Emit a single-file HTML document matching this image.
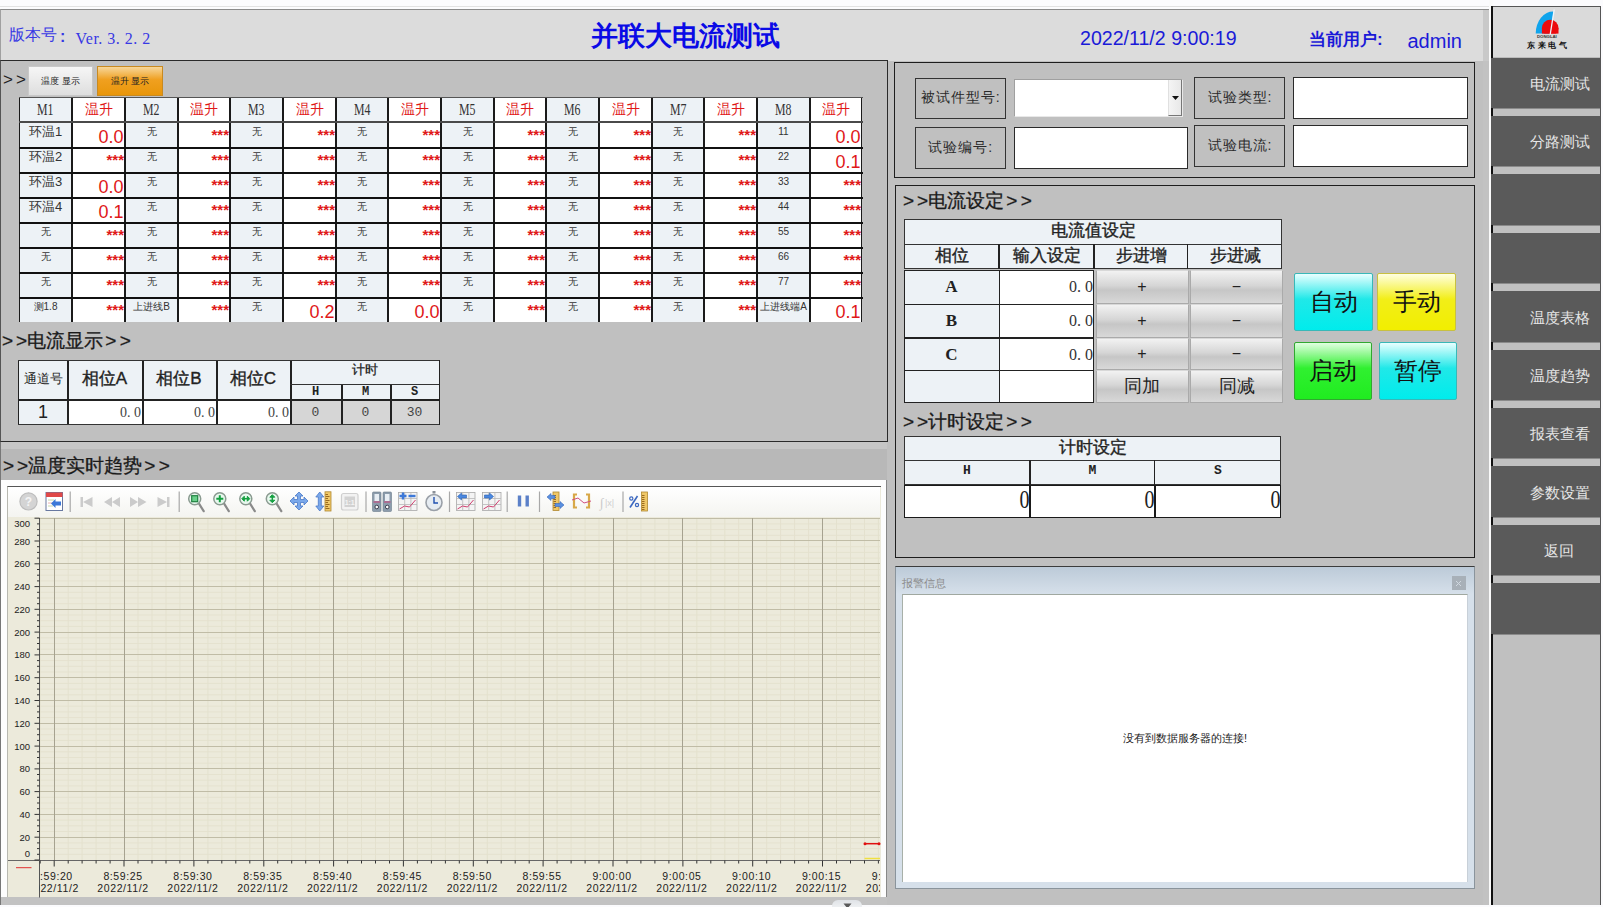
<!DOCTYPE html><html><head><meta charset="utf-8"><style>
html,body{margin:0;padding:0;width:1603px;height:907px;overflow:hidden;background:#fbfbfd;}
body{position:relative;font-family:'Liberation Sans', sans-serif;}
div{box-sizing:border-box;}
.c{display:flex;align-items:center;justify-content:center;}
</style></head><body>
<div style="position:absolute;left:0px;top:6px;width:1489px;height:1px;background:#e2e2e2"></div>
<div style="position:absolute;left:0px;top:9px;width:1489px;height:52px;background:#dcdcdc;border-top:1px solid #8a8a8a;border-left:1px solid #a0a0a0"></div>
<div style="position:absolute;left:1483px;top:10px;width:6px;height:51px;background:#c9c9c9"></div>
<div style="position:absolute;left:9px;top:25px;white-space:nowrap;font-size:16px;color:#3838e4;line-height:20px">版本号</div>
<div style="position:absolute;left:60px;top:26.5px;white-space:nowrap;font-size:16px;font-weight:bold;color:#3838e4;line-height:20px">:</div>
<div style="position:absolute;left:75.5px;top:28.5px;white-space:nowrap;font-family:'Liberation Serif', serif;letter-spacing:0.5px;font-size:16px;color:#3838e4;line-height:20px">Ver. 3. 2. 2</div>
<div style="position:absolute;left:591px;top:20px;white-space:nowrap;font-size:27px;font-weight:bold;color:#0a0ae6;line-height:32px">并联大电流测试</div>
<div style="position:absolute;left:1080px;top:26.5px;white-space:nowrap;font-size:19.6px;color:#1a1ad8;line-height:22px">2022/11/2 9:00:19</div>
<div style="position:absolute;left:1309px;top:29px;white-space:nowrap;font-size:17px;font-weight:bold;color:#1a1ad8;line-height:22px">当前用户:</div>
<div style="position:absolute;left:1407.5px;top:30px;white-space:nowrap;font-size:20px;color:#1a1ad8;line-height:22px">admin</div>
<div style="position:absolute;left:0px;top:60px;width:887.5px;height:382px;background:#c0c0c0;border:1.5px solid #2a2a2a;border-left:1px solid #555"></div>
<div style="position:absolute;left:3px;top:70px;white-space:nowrap;font-size:17px;color:#222;line-height:20px">&gt;<span style="margin-left:3px">&gt;</span></div>
<div style="position:absolute;left:28px;top:66px;width:65px;height:30px;background:linear-gradient(#f6f6f6,#dedede);border:1px solid #c8c8c8;font-size:9px;color:#222"><div class="c" style="height:100%">温度 显示</div></div>
<div style="position:absolute;left:97px;top:66px;width:66px;height:30px;background:linear-gradient(#f7d79a,#f0a020 45%,#e8960a);border:1px solid #c98a20;font-size:9px;color:#222"><div class="c" style="height:100%">温升 显示</div></div>
<div style="position:absolute;left:19px;top:97px;width:53px;height:25px;background:#edf2f6"></div>
<div style="position:absolute;left:19px;top:100px;white-space:nowrap;width:53px;text-align:center;font-family:'Liberation Serif', serif;font-size:16px;color:#333;line-height:20px"><span style="display:inline-block;transform:scaleX(0.74)">M1</span></div>
<div style="position:absolute;left:19px;top:122px;width:53px;height:25px;background:#edf2f6"></div>
<div style="position:absolute;left:19px;top:125px;white-space:nowrap;width:53px;text-align:center;font-size:13px;color:#333;line-height:14px">环温1</div>
<div style="position:absolute;left:19px;top:147px;width:53px;height:25px;background:#edf2f6"></div>
<div style="position:absolute;left:19px;top:150px;white-space:nowrap;width:53px;text-align:center;font-size:13px;color:#333;line-height:14px">环温2</div>
<div style="position:absolute;left:19px;top:172px;width:53px;height:25px;background:#edf2f6"></div>
<div style="position:absolute;left:19px;top:175px;white-space:nowrap;width:53px;text-align:center;font-size:13px;color:#333;line-height:14px">环温3</div>
<div style="position:absolute;left:19px;top:197px;width:53px;height:25px;background:#edf2f6"></div>
<div style="position:absolute;left:19px;top:200px;white-space:nowrap;width:53px;text-align:center;font-size:13px;color:#333;line-height:14px">环温4</div>
<div style="position:absolute;left:19px;top:222px;width:53px;height:25px;background:#edf2f6"></div>
<div style="position:absolute;left:19px;top:225px;white-space:nowrap;width:53px;text-align:center;font-size:10px;color:#333;line-height:14px">无</div>
<div style="position:absolute;left:19px;top:247px;width:53px;height:25px;background:#edf2f6"></div>
<div style="position:absolute;left:19px;top:250px;white-space:nowrap;width:53px;text-align:center;font-size:10px;color:#333;line-height:14px">无</div>
<div style="position:absolute;left:19px;top:272px;width:53px;height:25px;background:#edf2f6"></div>
<div style="position:absolute;left:19px;top:275px;white-space:nowrap;width:53px;text-align:center;font-size:10px;color:#333;line-height:14px">无</div>
<div style="position:absolute;left:19px;top:297px;width:53px;height:25px;background:#edf2f6"></div>
<div style="position:absolute;left:19px;top:300px;white-space:nowrap;width:53px;text-align:center;font-size:10px;color:#333;line-height:14px">测1.8</div>
<div style="position:absolute;left:72px;top:97px;width:53px;height:25px;background:#ffffff"></div>
<div style="position:absolute;left:72px;top:100px;white-space:nowrap;width:53px;text-align:center;font-size:13.5px;color:#e01818;line-height:20px">温升</div>
<div style="position:absolute;left:72px;top:122px;width:53px;height:25px;background:#ffffff"></div>
<div style="position:absolute;left:72px;top:126.5px;white-space:nowrap;width:51.5px;text-align:right;font-size:18px;color:#e01818;line-height:20px">0.0</div>
<div style="position:absolute;left:72px;top:147px;width:53px;height:25px;background:#ffffff"></div>
<div style="position:absolute;left:72px;top:152px;white-space:nowrap;width:52px;text-align:right;font-size:15px;font-weight:bold;color:#e01818;line-height:15px">***</div>
<div style="position:absolute;left:72px;top:172px;width:53px;height:25px;background:#ffffff"></div>
<div style="position:absolute;left:72px;top:176.5px;white-space:nowrap;width:51.5px;text-align:right;font-size:18px;color:#e01818;line-height:20px">0.0</div>
<div style="position:absolute;left:72px;top:197px;width:53px;height:25px;background:#ffffff"></div>
<div style="position:absolute;left:72px;top:201.5px;white-space:nowrap;width:51.5px;text-align:right;font-size:18px;color:#e01818;line-height:20px">0.1</div>
<div style="position:absolute;left:72px;top:222px;width:53px;height:25px;background:#ffffff"></div>
<div style="position:absolute;left:72px;top:227px;white-space:nowrap;width:52px;text-align:right;font-size:15px;font-weight:bold;color:#e01818;line-height:15px">***</div>
<div style="position:absolute;left:72px;top:247px;width:53px;height:25px;background:#ffffff"></div>
<div style="position:absolute;left:72px;top:252px;white-space:nowrap;width:52px;text-align:right;font-size:15px;font-weight:bold;color:#e01818;line-height:15px">***</div>
<div style="position:absolute;left:72px;top:272px;width:53px;height:25px;background:#ffffff"></div>
<div style="position:absolute;left:72px;top:277px;white-space:nowrap;width:52px;text-align:right;font-size:15px;font-weight:bold;color:#e01818;line-height:15px">***</div>
<div style="position:absolute;left:72px;top:297px;width:53px;height:25px;background:#ffffff"></div>
<div style="position:absolute;left:72px;top:302px;white-space:nowrap;width:52px;text-align:right;font-size:15px;font-weight:bold;color:#e01818;line-height:15px">***</div>
<div style="position:absolute;left:125px;top:97px;width:53px;height:25px;background:#edf2f6"></div>
<div style="position:absolute;left:125px;top:100px;white-space:nowrap;width:53px;text-align:center;font-family:'Liberation Serif', serif;font-size:16px;color:#333;line-height:20px"><span style="display:inline-block;transform:scaleX(0.74)">M2</span></div>
<div style="position:absolute;left:125px;top:122px;width:53px;height:25px;background:#edf2f6"></div>
<div style="position:absolute;left:125px;top:125px;white-space:nowrap;width:53px;text-align:center;font-size:10px;color:#333;line-height:14px">无</div>
<div style="position:absolute;left:125px;top:147px;width:53px;height:25px;background:#edf2f6"></div>
<div style="position:absolute;left:125px;top:150px;white-space:nowrap;width:53px;text-align:center;font-size:10px;color:#333;line-height:14px">无</div>
<div style="position:absolute;left:125px;top:172px;width:53px;height:25px;background:#edf2f6"></div>
<div style="position:absolute;left:125px;top:175px;white-space:nowrap;width:53px;text-align:center;font-size:10px;color:#333;line-height:14px">无</div>
<div style="position:absolute;left:125px;top:197px;width:53px;height:25px;background:#edf2f6"></div>
<div style="position:absolute;left:125px;top:200px;white-space:nowrap;width:53px;text-align:center;font-size:10px;color:#333;line-height:14px">无</div>
<div style="position:absolute;left:125px;top:222px;width:53px;height:25px;background:#edf2f6"></div>
<div style="position:absolute;left:125px;top:225px;white-space:nowrap;width:53px;text-align:center;font-size:10px;color:#333;line-height:14px">无</div>
<div style="position:absolute;left:125px;top:247px;width:53px;height:25px;background:#edf2f6"></div>
<div style="position:absolute;left:125px;top:250px;white-space:nowrap;width:53px;text-align:center;font-size:10px;color:#333;line-height:14px">无</div>
<div style="position:absolute;left:125px;top:272px;width:53px;height:25px;background:#edf2f6"></div>
<div style="position:absolute;left:125px;top:275px;white-space:nowrap;width:53px;text-align:center;font-size:10px;color:#333;line-height:14px">无</div>
<div style="position:absolute;left:125px;top:297px;width:53px;height:25px;background:#edf2f6"></div>
<div style="position:absolute;left:125px;top:300px;white-space:nowrap;width:53px;text-align:center;font-size:10px;color:#333;line-height:14px">上进线B</div>
<div style="position:absolute;left:178px;top:97px;width:52px;height:25px;background:#ffffff"></div>
<div style="position:absolute;left:178px;top:100px;white-space:nowrap;width:52px;text-align:center;font-size:13.5px;color:#e01818;line-height:20px">温升</div>
<div style="position:absolute;left:178px;top:122px;width:52px;height:25px;background:#ffffff"></div>
<div style="position:absolute;left:178px;top:127px;white-space:nowrap;width:51px;text-align:right;font-size:15px;font-weight:bold;color:#e01818;line-height:15px">***</div>
<div style="position:absolute;left:178px;top:147px;width:52px;height:25px;background:#ffffff"></div>
<div style="position:absolute;left:178px;top:152px;white-space:nowrap;width:51px;text-align:right;font-size:15px;font-weight:bold;color:#e01818;line-height:15px">***</div>
<div style="position:absolute;left:178px;top:172px;width:52px;height:25px;background:#ffffff"></div>
<div style="position:absolute;left:178px;top:177px;white-space:nowrap;width:51px;text-align:right;font-size:15px;font-weight:bold;color:#e01818;line-height:15px">***</div>
<div style="position:absolute;left:178px;top:197px;width:52px;height:25px;background:#ffffff"></div>
<div style="position:absolute;left:178px;top:202px;white-space:nowrap;width:51px;text-align:right;font-size:15px;font-weight:bold;color:#e01818;line-height:15px">***</div>
<div style="position:absolute;left:178px;top:222px;width:52px;height:25px;background:#ffffff"></div>
<div style="position:absolute;left:178px;top:227px;white-space:nowrap;width:51px;text-align:right;font-size:15px;font-weight:bold;color:#e01818;line-height:15px">***</div>
<div style="position:absolute;left:178px;top:247px;width:52px;height:25px;background:#ffffff"></div>
<div style="position:absolute;left:178px;top:252px;white-space:nowrap;width:51px;text-align:right;font-size:15px;font-weight:bold;color:#e01818;line-height:15px">***</div>
<div style="position:absolute;left:178px;top:272px;width:52px;height:25px;background:#ffffff"></div>
<div style="position:absolute;left:178px;top:277px;white-space:nowrap;width:51px;text-align:right;font-size:15px;font-weight:bold;color:#e01818;line-height:15px">***</div>
<div style="position:absolute;left:178px;top:297px;width:52px;height:25px;background:#ffffff"></div>
<div style="position:absolute;left:178px;top:302px;white-space:nowrap;width:51px;text-align:right;font-size:15px;font-weight:bold;color:#e01818;line-height:15px">***</div>
<div style="position:absolute;left:230px;top:97px;width:53px;height:25px;background:#edf2f6"></div>
<div style="position:absolute;left:230px;top:100px;white-space:nowrap;width:53px;text-align:center;font-family:'Liberation Serif', serif;font-size:16px;color:#333;line-height:20px"><span style="display:inline-block;transform:scaleX(0.74)">M3</span></div>
<div style="position:absolute;left:230px;top:122px;width:53px;height:25px;background:#edf2f6"></div>
<div style="position:absolute;left:230px;top:125px;white-space:nowrap;width:53px;text-align:center;font-size:10px;color:#333;line-height:14px">无</div>
<div style="position:absolute;left:230px;top:147px;width:53px;height:25px;background:#edf2f6"></div>
<div style="position:absolute;left:230px;top:150px;white-space:nowrap;width:53px;text-align:center;font-size:10px;color:#333;line-height:14px">无</div>
<div style="position:absolute;left:230px;top:172px;width:53px;height:25px;background:#edf2f6"></div>
<div style="position:absolute;left:230px;top:175px;white-space:nowrap;width:53px;text-align:center;font-size:10px;color:#333;line-height:14px">无</div>
<div style="position:absolute;left:230px;top:197px;width:53px;height:25px;background:#edf2f6"></div>
<div style="position:absolute;left:230px;top:200px;white-space:nowrap;width:53px;text-align:center;font-size:10px;color:#333;line-height:14px">无</div>
<div style="position:absolute;left:230px;top:222px;width:53px;height:25px;background:#edf2f6"></div>
<div style="position:absolute;left:230px;top:225px;white-space:nowrap;width:53px;text-align:center;font-size:10px;color:#333;line-height:14px">无</div>
<div style="position:absolute;left:230px;top:247px;width:53px;height:25px;background:#edf2f6"></div>
<div style="position:absolute;left:230px;top:250px;white-space:nowrap;width:53px;text-align:center;font-size:10px;color:#333;line-height:14px">无</div>
<div style="position:absolute;left:230px;top:272px;width:53px;height:25px;background:#edf2f6"></div>
<div style="position:absolute;left:230px;top:275px;white-space:nowrap;width:53px;text-align:center;font-size:10px;color:#333;line-height:14px">无</div>
<div style="position:absolute;left:230px;top:297px;width:53px;height:25px;background:#edf2f6"></div>
<div style="position:absolute;left:230px;top:300px;white-space:nowrap;width:53px;text-align:center;font-size:10px;color:#333;line-height:14px">无</div>
<div style="position:absolute;left:283px;top:97px;width:53px;height:25px;background:#ffffff"></div>
<div style="position:absolute;left:283px;top:100px;white-space:nowrap;width:53px;text-align:center;font-size:13.5px;color:#e01818;line-height:20px">温升</div>
<div style="position:absolute;left:283px;top:122px;width:53px;height:25px;background:#ffffff"></div>
<div style="position:absolute;left:283px;top:127px;white-space:nowrap;width:52px;text-align:right;font-size:15px;font-weight:bold;color:#e01818;line-height:15px">***</div>
<div style="position:absolute;left:283px;top:147px;width:53px;height:25px;background:#ffffff"></div>
<div style="position:absolute;left:283px;top:152px;white-space:nowrap;width:52px;text-align:right;font-size:15px;font-weight:bold;color:#e01818;line-height:15px">***</div>
<div style="position:absolute;left:283px;top:172px;width:53px;height:25px;background:#ffffff"></div>
<div style="position:absolute;left:283px;top:177px;white-space:nowrap;width:52px;text-align:right;font-size:15px;font-weight:bold;color:#e01818;line-height:15px">***</div>
<div style="position:absolute;left:283px;top:197px;width:53px;height:25px;background:#ffffff"></div>
<div style="position:absolute;left:283px;top:202px;white-space:nowrap;width:52px;text-align:right;font-size:15px;font-weight:bold;color:#e01818;line-height:15px">***</div>
<div style="position:absolute;left:283px;top:222px;width:53px;height:25px;background:#ffffff"></div>
<div style="position:absolute;left:283px;top:227px;white-space:nowrap;width:52px;text-align:right;font-size:15px;font-weight:bold;color:#e01818;line-height:15px">***</div>
<div style="position:absolute;left:283px;top:247px;width:53px;height:25px;background:#ffffff"></div>
<div style="position:absolute;left:283px;top:252px;white-space:nowrap;width:52px;text-align:right;font-size:15px;font-weight:bold;color:#e01818;line-height:15px">***</div>
<div style="position:absolute;left:283px;top:272px;width:53px;height:25px;background:#ffffff"></div>
<div style="position:absolute;left:283px;top:277px;white-space:nowrap;width:52px;text-align:right;font-size:15px;font-weight:bold;color:#e01818;line-height:15px">***</div>
<div style="position:absolute;left:283px;top:297px;width:53px;height:25px;background:#ffffff"></div>
<div style="position:absolute;left:283px;top:301.5px;white-space:nowrap;width:51.5px;text-align:right;font-size:18px;color:#e01818;line-height:20px">0.2</div>
<div style="position:absolute;left:336px;top:97px;width:52px;height:25px;background:#edf2f6"></div>
<div style="position:absolute;left:336px;top:100px;white-space:nowrap;width:52px;text-align:center;font-family:'Liberation Serif', serif;font-size:16px;color:#333;line-height:20px"><span style="display:inline-block;transform:scaleX(0.74)">M4</span></div>
<div style="position:absolute;left:336px;top:122px;width:52px;height:25px;background:#edf2f6"></div>
<div style="position:absolute;left:336px;top:125px;white-space:nowrap;width:52px;text-align:center;font-size:10px;color:#333;line-height:14px">无</div>
<div style="position:absolute;left:336px;top:147px;width:52px;height:25px;background:#edf2f6"></div>
<div style="position:absolute;left:336px;top:150px;white-space:nowrap;width:52px;text-align:center;font-size:10px;color:#333;line-height:14px">无</div>
<div style="position:absolute;left:336px;top:172px;width:52px;height:25px;background:#edf2f6"></div>
<div style="position:absolute;left:336px;top:175px;white-space:nowrap;width:52px;text-align:center;font-size:10px;color:#333;line-height:14px">无</div>
<div style="position:absolute;left:336px;top:197px;width:52px;height:25px;background:#edf2f6"></div>
<div style="position:absolute;left:336px;top:200px;white-space:nowrap;width:52px;text-align:center;font-size:10px;color:#333;line-height:14px">无</div>
<div style="position:absolute;left:336px;top:222px;width:52px;height:25px;background:#edf2f6"></div>
<div style="position:absolute;left:336px;top:225px;white-space:nowrap;width:52px;text-align:center;font-size:10px;color:#333;line-height:14px">无</div>
<div style="position:absolute;left:336px;top:247px;width:52px;height:25px;background:#edf2f6"></div>
<div style="position:absolute;left:336px;top:250px;white-space:nowrap;width:52px;text-align:center;font-size:10px;color:#333;line-height:14px">无</div>
<div style="position:absolute;left:336px;top:272px;width:52px;height:25px;background:#edf2f6"></div>
<div style="position:absolute;left:336px;top:275px;white-space:nowrap;width:52px;text-align:center;font-size:10px;color:#333;line-height:14px">无</div>
<div style="position:absolute;left:336px;top:297px;width:52px;height:25px;background:#edf2f6"></div>
<div style="position:absolute;left:336px;top:300px;white-space:nowrap;width:52px;text-align:center;font-size:10px;color:#333;line-height:14px">无</div>
<div style="position:absolute;left:388px;top:97px;width:53px;height:25px;background:#ffffff"></div>
<div style="position:absolute;left:388px;top:100px;white-space:nowrap;width:53px;text-align:center;font-size:13.5px;color:#e01818;line-height:20px">温升</div>
<div style="position:absolute;left:388px;top:122px;width:53px;height:25px;background:#ffffff"></div>
<div style="position:absolute;left:388px;top:127px;white-space:nowrap;width:52px;text-align:right;font-size:15px;font-weight:bold;color:#e01818;line-height:15px">***</div>
<div style="position:absolute;left:388px;top:147px;width:53px;height:25px;background:#ffffff"></div>
<div style="position:absolute;left:388px;top:152px;white-space:nowrap;width:52px;text-align:right;font-size:15px;font-weight:bold;color:#e01818;line-height:15px">***</div>
<div style="position:absolute;left:388px;top:172px;width:53px;height:25px;background:#ffffff"></div>
<div style="position:absolute;left:388px;top:177px;white-space:nowrap;width:52px;text-align:right;font-size:15px;font-weight:bold;color:#e01818;line-height:15px">***</div>
<div style="position:absolute;left:388px;top:197px;width:53px;height:25px;background:#ffffff"></div>
<div style="position:absolute;left:388px;top:202px;white-space:nowrap;width:52px;text-align:right;font-size:15px;font-weight:bold;color:#e01818;line-height:15px">***</div>
<div style="position:absolute;left:388px;top:222px;width:53px;height:25px;background:#ffffff"></div>
<div style="position:absolute;left:388px;top:227px;white-space:nowrap;width:52px;text-align:right;font-size:15px;font-weight:bold;color:#e01818;line-height:15px">***</div>
<div style="position:absolute;left:388px;top:247px;width:53px;height:25px;background:#ffffff"></div>
<div style="position:absolute;left:388px;top:252px;white-space:nowrap;width:52px;text-align:right;font-size:15px;font-weight:bold;color:#e01818;line-height:15px">***</div>
<div style="position:absolute;left:388px;top:272px;width:53px;height:25px;background:#ffffff"></div>
<div style="position:absolute;left:388px;top:277px;white-space:nowrap;width:52px;text-align:right;font-size:15px;font-weight:bold;color:#e01818;line-height:15px">***</div>
<div style="position:absolute;left:388px;top:297px;width:53px;height:25px;background:#ffffff"></div>
<div style="position:absolute;left:388px;top:301.5px;white-space:nowrap;width:51.5px;text-align:right;font-size:18px;color:#e01818;line-height:20px">0.0</div>
<div style="position:absolute;left:441px;top:97px;width:53px;height:25px;background:#edf2f6"></div>
<div style="position:absolute;left:441px;top:100px;white-space:nowrap;width:53px;text-align:center;font-family:'Liberation Serif', serif;font-size:16px;color:#333;line-height:20px"><span style="display:inline-block;transform:scaleX(0.74)">M5</span></div>
<div style="position:absolute;left:441px;top:122px;width:53px;height:25px;background:#edf2f6"></div>
<div style="position:absolute;left:441px;top:125px;white-space:nowrap;width:53px;text-align:center;font-size:10px;color:#333;line-height:14px">无</div>
<div style="position:absolute;left:441px;top:147px;width:53px;height:25px;background:#edf2f6"></div>
<div style="position:absolute;left:441px;top:150px;white-space:nowrap;width:53px;text-align:center;font-size:10px;color:#333;line-height:14px">无</div>
<div style="position:absolute;left:441px;top:172px;width:53px;height:25px;background:#edf2f6"></div>
<div style="position:absolute;left:441px;top:175px;white-space:nowrap;width:53px;text-align:center;font-size:10px;color:#333;line-height:14px">无</div>
<div style="position:absolute;left:441px;top:197px;width:53px;height:25px;background:#edf2f6"></div>
<div style="position:absolute;left:441px;top:200px;white-space:nowrap;width:53px;text-align:center;font-size:10px;color:#333;line-height:14px">无</div>
<div style="position:absolute;left:441px;top:222px;width:53px;height:25px;background:#edf2f6"></div>
<div style="position:absolute;left:441px;top:225px;white-space:nowrap;width:53px;text-align:center;font-size:10px;color:#333;line-height:14px">无</div>
<div style="position:absolute;left:441px;top:247px;width:53px;height:25px;background:#edf2f6"></div>
<div style="position:absolute;left:441px;top:250px;white-space:nowrap;width:53px;text-align:center;font-size:10px;color:#333;line-height:14px">无</div>
<div style="position:absolute;left:441px;top:272px;width:53px;height:25px;background:#edf2f6"></div>
<div style="position:absolute;left:441px;top:275px;white-space:nowrap;width:53px;text-align:center;font-size:10px;color:#333;line-height:14px">无</div>
<div style="position:absolute;left:441px;top:297px;width:53px;height:25px;background:#edf2f6"></div>
<div style="position:absolute;left:441px;top:300px;white-space:nowrap;width:53px;text-align:center;font-size:10px;color:#333;line-height:14px">无</div>
<div style="position:absolute;left:494px;top:97px;width:52px;height:25px;background:#ffffff"></div>
<div style="position:absolute;left:494px;top:100px;white-space:nowrap;width:52px;text-align:center;font-size:13.5px;color:#e01818;line-height:20px">温升</div>
<div style="position:absolute;left:494px;top:122px;width:52px;height:25px;background:#ffffff"></div>
<div style="position:absolute;left:494px;top:127px;white-space:nowrap;width:51px;text-align:right;font-size:15px;font-weight:bold;color:#e01818;line-height:15px">***</div>
<div style="position:absolute;left:494px;top:147px;width:52px;height:25px;background:#ffffff"></div>
<div style="position:absolute;left:494px;top:152px;white-space:nowrap;width:51px;text-align:right;font-size:15px;font-weight:bold;color:#e01818;line-height:15px">***</div>
<div style="position:absolute;left:494px;top:172px;width:52px;height:25px;background:#ffffff"></div>
<div style="position:absolute;left:494px;top:177px;white-space:nowrap;width:51px;text-align:right;font-size:15px;font-weight:bold;color:#e01818;line-height:15px">***</div>
<div style="position:absolute;left:494px;top:197px;width:52px;height:25px;background:#ffffff"></div>
<div style="position:absolute;left:494px;top:202px;white-space:nowrap;width:51px;text-align:right;font-size:15px;font-weight:bold;color:#e01818;line-height:15px">***</div>
<div style="position:absolute;left:494px;top:222px;width:52px;height:25px;background:#ffffff"></div>
<div style="position:absolute;left:494px;top:227px;white-space:nowrap;width:51px;text-align:right;font-size:15px;font-weight:bold;color:#e01818;line-height:15px">***</div>
<div style="position:absolute;left:494px;top:247px;width:52px;height:25px;background:#ffffff"></div>
<div style="position:absolute;left:494px;top:252px;white-space:nowrap;width:51px;text-align:right;font-size:15px;font-weight:bold;color:#e01818;line-height:15px">***</div>
<div style="position:absolute;left:494px;top:272px;width:52px;height:25px;background:#ffffff"></div>
<div style="position:absolute;left:494px;top:277px;white-space:nowrap;width:51px;text-align:right;font-size:15px;font-weight:bold;color:#e01818;line-height:15px">***</div>
<div style="position:absolute;left:494px;top:297px;width:52px;height:25px;background:#ffffff"></div>
<div style="position:absolute;left:494px;top:302px;white-space:nowrap;width:51px;text-align:right;font-size:15px;font-weight:bold;color:#e01818;line-height:15px">***</div>
<div style="position:absolute;left:546px;top:97px;width:53px;height:25px;background:#edf2f6"></div>
<div style="position:absolute;left:546px;top:100px;white-space:nowrap;width:53px;text-align:center;font-family:'Liberation Serif', serif;font-size:16px;color:#333;line-height:20px"><span style="display:inline-block;transform:scaleX(0.74)">M6</span></div>
<div style="position:absolute;left:546px;top:122px;width:53px;height:25px;background:#edf2f6"></div>
<div style="position:absolute;left:546px;top:125px;white-space:nowrap;width:53px;text-align:center;font-size:10px;color:#333;line-height:14px">无</div>
<div style="position:absolute;left:546px;top:147px;width:53px;height:25px;background:#edf2f6"></div>
<div style="position:absolute;left:546px;top:150px;white-space:nowrap;width:53px;text-align:center;font-size:10px;color:#333;line-height:14px">无</div>
<div style="position:absolute;left:546px;top:172px;width:53px;height:25px;background:#edf2f6"></div>
<div style="position:absolute;left:546px;top:175px;white-space:nowrap;width:53px;text-align:center;font-size:10px;color:#333;line-height:14px">无</div>
<div style="position:absolute;left:546px;top:197px;width:53px;height:25px;background:#edf2f6"></div>
<div style="position:absolute;left:546px;top:200px;white-space:nowrap;width:53px;text-align:center;font-size:10px;color:#333;line-height:14px">无</div>
<div style="position:absolute;left:546px;top:222px;width:53px;height:25px;background:#edf2f6"></div>
<div style="position:absolute;left:546px;top:225px;white-space:nowrap;width:53px;text-align:center;font-size:10px;color:#333;line-height:14px">无</div>
<div style="position:absolute;left:546px;top:247px;width:53px;height:25px;background:#edf2f6"></div>
<div style="position:absolute;left:546px;top:250px;white-space:nowrap;width:53px;text-align:center;font-size:10px;color:#333;line-height:14px">无</div>
<div style="position:absolute;left:546px;top:272px;width:53px;height:25px;background:#edf2f6"></div>
<div style="position:absolute;left:546px;top:275px;white-space:nowrap;width:53px;text-align:center;font-size:10px;color:#333;line-height:14px">无</div>
<div style="position:absolute;left:546px;top:297px;width:53px;height:25px;background:#edf2f6"></div>
<div style="position:absolute;left:546px;top:300px;white-space:nowrap;width:53px;text-align:center;font-size:10px;color:#333;line-height:14px">无</div>
<div style="position:absolute;left:599px;top:97px;width:53px;height:25px;background:#ffffff"></div>
<div style="position:absolute;left:599px;top:100px;white-space:nowrap;width:53px;text-align:center;font-size:13.5px;color:#e01818;line-height:20px">温升</div>
<div style="position:absolute;left:599px;top:122px;width:53px;height:25px;background:#ffffff"></div>
<div style="position:absolute;left:599px;top:127px;white-space:nowrap;width:52px;text-align:right;font-size:15px;font-weight:bold;color:#e01818;line-height:15px">***</div>
<div style="position:absolute;left:599px;top:147px;width:53px;height:25px;background:#ffffff"></div>
<div style="position:absolute;left:599px;top:152px;white-space:nowrap;width:52px;text-align:right;font-size:15px;font-weight:bold;color:#e01818;line-height:15px">***</div>
<div style="position:absolute;left:599px;top:172px;width:53px;height:25px;background:#ffffff"></div>
<div style="position:absolute;left:599px;top:177px;white-space:nowrap;width:52px;text-align:right;font-size:15px;font-weight:bold;color:#e01818;line-height:15px">***</div>
<div style="position:absolute;left:599px;top:197px;width:53px;height:25px;background:#ffffff"></div>
<div style="position:absolute;left:599px;top:202px;white-space:nowrap;width:52px;text-align:right;font-size:15px;font-weight:bold;color:#e01818;line-height:15px">***</div>
<div style="position:absolute;left:599px;top:222px;width:53px;height:25px;background:#ffffff"></div>
<div style="position:absolute;left:599px;top:227px;white-space:nowrap;width:52px;text-align:right;font-size:15px;font-weight:bold;color:#e01818;line-height:15px">***</div>
<div style="position:absolute;left:599px;top:247px;width:53px;height:25px;background:#ffffff"></div>
<div style="position:absolute;left:599px;top:252px;white-space:nowrap;width:52px;text-align:right;font-size:15px;font-weight:bold;color:#e01818;line-height:15px">***</div>
<div style="position:absolute;left:599px;top:272px;width:53px;height:25px;background:#ffffff"></div>
<div style="position:absolute;left:599px;top:277px;white-space:nowrap;width:52px;text-align:right;font-size:15px;font-weight:bold;color:#e01818;line-height:15px">***</div>
<div style="position:absolute;left:599px;top:297px;width:53px;height:25px;background:#ffffff"></div>
<div style="position:absolute;left:599px;top:302px;white-space:nowrap;width:52px;text-align:right;font-size:15px;font-weight:bold;color:#e01818;line-height:15px">***</div>
<div style="position:absolute;left:652px;top:97px;width:52px;height:25px;background:#edf2f6"></div>
<div style="position:absolute;left:652px;top:100px;white-space:nowrap;width:52px;text-align:center;font-family:'Liberation Serif', serif;font-size:16px;color:#333;line-height:20px"><span style="display:inline-block;transform:scaleX(0.74)">M7</span></div>
<div style="position:absolute;left:652px;top:122px;width:52px;height:25px;background:#edf2f6"></div>
<div style="position:absolute;left:652px;top:125px;white-space:nowrap;width:52px;text-align:center;font-size:10px;color:#333;line-height:14px">无</div>
<div style="position:absolute;left:652px;top:147px;width:52px;height:25px;background:#edf2f6"></div>
<div style="position:absolute;left:652px;top:150px;white-space:nowrap;width:52px;text-align:center;font-size:10px;color:#333;line-height:14px">无</div>
<div style="position:absolute;left:652px;top:172px;width:52px;height:25px;background:#edf2f6"></div>
<div style="position:absolute;left:652px;top:175px;white-space:nowrap;width:52px;text-align:center;font-size:10px;color:#333;line-height:14px">无</div>
<div style="position:absolute;left:652px;top:197px;width:52px;height:25px;background:#edf2f6"></div>
<div style="position:absolute;left:652px;top:200px;white-space:nowrap;width:52px;text-align:center;font-size:10px;color:#333;line-height:14px">无</div>
<div style="position:absolute;left:652px;top:222px;width:52px;height:25px;background:#edf2f6"></div>
<div style="position:absolute;left:652px;top:225px;white-space:nowrap;width:52px;text-align:center;font-size:10px;color:#333;line-height:14px">无</div>
<div style="position:absolute;left:652px;top:247px;width:52px;height:25px;background:#edf2f6"></div>
<div style="position:absolute;left:652px;top:250px;white-space:nowrap;width:52px;text-align:center;font-size:10px;color:#333;line-height:14px">无</div>
<div style="position:absolute;left:652px;top:272px;width:52px;height:25px;background:#edf2f6"></div>
<div style="position:absolute;left:652px;top:275px;white-space:nowrap;width:52px;text-align:center;font-size:10px;color:#333;line-height:14px">无</div>
<div style="position:absolute;left:652px;top:297px;width:52px;height:25px;background:#edf2f6"></div>
<div style="position:absolute;left:652px;top:300px;white-space:nowrap;width:52px;text-align:center;font-size:10px;color:#333;line-height:14px">无</div>
<div style="position:absolute;left:704px;top:97px;width:53px;height:25px;background:#ffffff"></div>
<div style="position:absolute;left:704px;top:100px;white-space:nowrap;width:53px;text-align:center;font-size:13.5px;color:#e01818;line-height:20px">温升</div>
<div style="position:absolute;left:704px;top:122px;width:53px;height:25px;background:#ffffff"></div>
<div style="position:absolute;left:704px;top:127px;white-space:nowrap;width:52px;text-align:right;font-size:15px;font-weight:bold;color:#e01818;line-height:15px">***</div>
<div style="position:absolute;left:704px;top:147px;width:53px;height:25px;background:#ffffff"></div>
<div style="position:absolute;left:704px;top:152px;white-space:nowrap;width:52px;text-align:right;font-size:15px;font-weight:bold;color:#e01818;line-height:15px">***</div>
<div style="position:absolute;left:704px;top:172px;width:53px;height:25px;background:#ffffff"></div>
<div style="position:absolute;left:704px;top:177px;white-space:nowrap;width:52px;text-align:right;font-size:15px;font-weight:bold;color:#e01818;line-height:15px">***</div>
<div style="position:absolute;left:704px;top:197px;width:53px;height:25px;background:#ffffff"></div>
<div style="position:absolute;left:704px;top:202px;white-space:nowrap;width:52px;text-align:right;font-size:15px;font-weight:bold;color:#e01818;line-height:15px">***</div>
<div style="position:absolute;left:704px;top:222px;width:53px;height:25px;background:#ffffff"></div>
<div style="position:absolute;left:704px;top:227px;white-space:nowrap;width:52px;text-align:right;font-size:15px;font-weight:bold;color:#e01818;line-height:15px">***</div>
<div style="position:absolute;left:704px;top:247px;width:53px;height:25px;background:#ffffff"></div>
<div style="position:absolute;left:704px;top:252px;white-space:nowrap;width:52px;text-align:right;font-size:15px;font-weight:bold;color:#e01818;line-height:15px">***</div>
<div style="position:absolute;left:704px;top:272px;width:53px;height:25px;background:#ffffff"></div>
<div style="position:absolute;left:704px;top:277px;white-space:nowrap;width:52px;text-align:right;font-size:15px;font-weight:bold;color:#e01818;line-height:15px">***</div>
<div style="position:absolute;left:704px;top:297px;width:53px;height:25px;background:#ffffff"></div>
<div style="position:absolute;left:704px;top:302px;white-space:nowrap;width:52px;text-align:right;font-size:15px;font-weight:bold;color:#e01818;line-height:15px">***</div>
<div style="position:absolute;left:757px;top:97px;width:53px;height:25px;background:#edf2f6"></div>
<div style="position:absolute;left:757px;top:100px;white-space:nowrap;width:53px;text-align:center;font-family:'Liberation Serif', serif;font-size:16px;color:#333;line-height:20px"><span style="display:inline-block;transform:scaleX(0.74)">M8</span></div>
<div style="position:absolute;left:757px;top:122px;width:53px;height:25px;background:#edf2f6"></div>
<div style="position:absolute;left:757px;top:125px;white-space:nowrap;width:53px;text-align:center;font-size:10px;color:#333;line-height:14px">11</div>
<div style="position:absolute;left:757px;top:147px;width:53px;height:25px;background:#edf2f6"></div>
<div style="position:absolute;left:757px;top:150px;white-space:nowrap;width:53px;text-align:center;font-size:10px;color:#333;line-height:14px">22</div>
<div style="position:absolute;left:757px;top:172px;width:53px;height:25px;background:#edf2f6"></div>
<div style="position:absolute;left:757px;top:175px;white-space:nowrap;width:53px;text-align:center;font-size:10px;color:#333;line-height:14px">33</div>
<div style="position:absolute;left:757px;top:197px;width:53px;height:25px;background:#edf2f6"></div>
<div style="position:absolute;left:757px;top:200px;white-space:nowrap;width:53px;text-align:center;font-size:10px;color:#333;line-height:14px">44</div>
<div style="position:absolute;left:757px;top:222px;width:53px;height:25px;background:#edf2f6"></div>
<div style="position:absolute;left:757px;top:225px;white-space:nowrap;width:53px;text-align:center;font-size:10px;color:#333;line-height:14px">55</div>
<div style="position:absolute;left:757px;top:247px;width:53px;height:25px;background:#edf2f6"></div>
<div style="position:absolute;left:757px;top:250px;white-space:nowrap;width:53px;text-align:center;font-size:10px;color:#333;line-height:14px">66</div>
<div style="position:absolute;left:757px;top:272px;width:53px;height:25px;background:#edf2f6"></div>
<div style="position:absolute;left:757px;top:275px;white-space:nowrap;width:53px;text-align:center;font-size:10px;color:#333;line-height:14px">77</div>
<div style="position:absolute;left:757px;top:297px;width:53px;height:25px;background:#edf2f6"></div>
<div style="position:absolute;left:757px;top:300px;white-space:nowrap;width:53px;text-align:center;font-size:10px;color:#333;line-height:14px">上进线端A</div>
<div style="position:absolute;left:810px;top:97px;width:52px;height:25px;background:#ffffff"></div>
<div style="position:absolute;left:810px;top:100px;white-space:nowrap;width:52px;text-align:center;font-size:13.5px;color:#e01818;line-height:20px">温升</div>
<div style="position:absolute;left:810px;top:122px;width:52px;height:25px;background:#ffffff"></div>
<div style="position:absolute;left:810px;top:126.5px;white-space:nowrap;width:50.5px;text-align:right;font-size:18px;color:#e01818;line-height:20px">0.0</div>
<div style="position:absolute;left:810px;top:147px;width:52px;height:25px;background:#ffffff"></div>
<div style="position:absolute;left:810px;top:151.5px;white-space:nowrap;width:50.5px;text-align:right;font-size:18px;color:#e01818;line-height:20px">0.1</div>
<div style="position:absolute;left:810px;top:172px;width:52px;height:25px;background:#ffffff"></div>
<div style="position:absolute;left:810px;top:177px;white-space:nowrap;width:51px;text-align:right;font-size:15px;font-weight:bold;color:#e01818;line-height:15px">***</div>
<div style="position:absolute;left:810px;top:197px;width:52px;height:25px;background:#ffffff"></div>
<div style="position:absolute;left:810px;top:202px;white-space:nowrap;width:51px;text-align:right;font-size:15px;font-weight:bold;color:#e01818;line-height:15px">***</div>
<div style="position:absolute;left:810px;top:222px;width:52px;height:25px;background:#ffffff"></div>
<div style="position:absolute;left:810px;top:227px;white-space:nowrap;width:51px;text-align:right;font-size:15px;font-weight:bold;color:#e01818;line-height:15px">***</div>
<div style="position:absolute;left:810px;top:247px;width:52px;height:25px;background:#ffffff"></div>
<div style="position:absolute;left:810px;top:252px;white-space:nowrap;width:51px;text-align:right;font-size:15px;font-weight:bold;color:#e01818;line-height:15px">***</div>
<div style="position:absolute;left:810px;top:272px;width:52px;height:25px;background:#ffffff"></div>
<div style="position:absolute;left:810px;top:277px;white-space:nowrap;width:51px;text-align:right;font-size:15px;font-weight:bold;color:#e01818;line-height:15px">***</div>
<div style="position:absolute;left:810px;top:297px;width:52px;height:25px;background:#ffffff"></div>
<div style="position:absolute;left:810px;top:301.5px;white-space:nowrap;width:50.5px;text-align:right;font-size:18px;color:#e01818;line-height:20px">0.1</div>
<div style="position:absolute;left:19px;top:97px;width:1px;height:225px;background:#1a1a1a"></div>
<div style="position:absolute;left:71px;top:97px;width:2px;height:225px;background:#1a1a1a"></div>
<div style="position:absolute;left:124px;top:97px;width:2px;height:225px;background:#1a1a1a"></div>
<div style="position:absolute;left:177px;top:97px;width:2px;height:225px;background:#1a1a1a"></div>
<div style="position:absolute;left:229px;top:97px;width:2px;height:225px;background:#1a1a1a"></div>
<div style="position:absolute;left:282px;top:97px;width:2px;height:225px;background:#1a1a1a"></div>
<div style="position:absolute;left:335px;top:97px;width:2px;height:225px;background:#1a1a1a"></div>
<div style="position:absolute;left:387px;top:97px;width:2px;height:225px;background:#1a1a1a"></div>
<div style="position:absolute;left:440px;top:97px;width:2px;height:225px;background:#1a1a1a"></div>
<div style="position:absolute;left:493px;top:97px;width:2px;height:225px;background:#1a1a1a"></div>
<div style="position:absolute;left:545px;top:97px;width:2px;height:225px;background:#1a1a1a"></div>
<div style="position:absolute;left:598px;top:97px;width:2px;height:225px;background:#1a1a1a"></div>
<div style="position:absolute;left:651px;top:97px;width:2px;height:225px;background:#1a1a1a"></div>
<div style="position:absolute;left:703px;top:97px;width:2px;height:225px;background:#1a1a1a"></div>
<div style="position:absolute;left:756px;top:97px;width:2px;height:225px;background:#1a1a1a"></div>
<div style="position:absolute;left:809px;top:97px;width:2px;height:225px;background:#1a1a1a"></div>
<div style="position:absolute;left:861px;top:97px;width:1px;height:225px;background:#1a1a1a"></div>
<div style="position:absolute;left:19px;top:97px;width:844px;height:1px;background:#555"></div>
<div style="position:absolute;left:19px;top:121px;width:844px;height:2px;background:#4a4a4a"></div>
<div style="position:absolute;left:19px;top:147px;width:844px;height:2px;background:#111"></div>
<div style="position:absolute;left:19px;top:172px;width:844px;height:2px;background:#111"></div>
<div style="position:absolute;left:19px;top:197px;width:844px;height:2px;background:#111"></div>
<div style="position:absolute;left:19px;top:222px;width:844px;height:2px;background:#111"></div>
<div style="position:absolute;left:19px;top:247px;width:844px;height:2px;background:#111"></div>
<div style="position:absolute;left:19px;top:272px;width:844px;height:2px;background:#111"></div>
<div style="position:absolute;left:19px;top:297px;width:844px;height:2px;background:#111"></div>
<div style="position:absolute;left:2px;top:329.5px;white-space:nowrap;font-size:19px;color:#1a1a1a;line-height:22px;-webkit-text-stroke:0.3px #1a1a1a">&gt;<span style="margin-left:3px">&gt;</span><span style="margin-left:0px">电流显示</span><span style="margin-left:2px">&gt;</span><span style="margin-left:3.5px">&gt;</span></div>
<div style="position:absolute;left:18px;top:360px;width:49px;height:40px;background:#edf2f6"></div>
<div style="position:absolute;left:18px;top:400px;width:49px;height:25px;background:#edf2f6"></div>
<div style="position:absolute;left:67px;top:360px;width:75px;height:40px;background:#edf2f6"></div>
<div style="position:absolute;left:67px;top:400px;width:75px;height:25px;background:#fff"></div>
<div style="position:absolute;left:142px;top:360px;width:74px;height:40px;background:#edf2f6"></div>
<div style="position:absolute;left:142px;top:400px;width:74px;height:25px;background:#fff"></div>
<div style="position:absolute;left:216px;top:360px;width:74px;height:40px;background:#edf2f6"></div>
<div style="position:absolute;left:216px;top:400px;width:74px;height:25px;background:#fff"></div>
<div style="position:absolute;left:290px;top:360px;width:51px;height:40px;background:#edf2f6"></div>
<div style="position:absolute;left:290px;top:400px;width:51px;height:25px;background:#d6d6d6"></div>
<div style="position:absolute;left:341px;top:360px;width:49px;height:40px;background:#edf2f6"></div>
<div style="position:absolute;left:341px;top:400px;width:49px;height:25px;background:#d6d6d6"></div>
<div style="position:absolute;left:390px;top:360px;width:49px;height:40px;background:#edf2f6"></div>
<div style="position:absolute;left:390px;top:400px;width:49px;height:25px;background:#d6d6d6"></div>
<div style="position:absolute;left:18px;top:360px;width:1px;height:65px;background:#222"></div>
<div style="position:absolute;left:67px;top:360px;width:2px;height:65px;background:#222"></div>
<div style="position:absolute;left:142px;top:360px;width:2px;height:65px;background:#222"></div>
<div style="position:absolute;left:216px;top:360px;width:2px;height:65px;background:#222"></div>
<div style="position:absolute;left:290px;top:360px;width:2px;height:65px;background:#222"></div>
<div style="position:absolute;left:341px;top:384px;width:2px;height:41px;background:#222"></div>
<div style="position:absolute;left:390px;top:384px;width:2px;height:41px;background:#222"></div>
<div style="position:absolute;left:439px;top:360px;width:1px;height:65px;background:#222"></div>
<div style="position:absolute;left:18px;top:360px;width:421px;height:1px;background:#333"></div>
<div style="position:absolute;left:290px;top:384px;width:149px;height:1px;background:#333"></div>
<div style="position:absolute;left:18px;top:399px;width:421px;height:2px;background:#222"></div>
<div style="position:absolute;left:18px;top:424px;width:421px;height:1px;background:#333"></div>
<div style="position:absolute;left:18px;top:371px;white-space:nowrap;width:50px;text-align:center;font-size:13px;color:#222;line-height:16px">通道号</div>
<div style="position:absolute;left:67px;top:369px;white-space:nowrap;width:75px;text-align:center;font-size:17px;font-weight:500;-webkit-text-stroke:0.35px #222;color:#222;line-height:20px">相位A</div>
<div style="position:absolute;left:142px;top:369px;white-space:nowrap;width:74px;text-align:center;font-size:17px;font-weight:500;-webkit-text-stroke:0.35px #222;color:#222;line-height:20px">相位B</div>
<div style="position:absolute;left:216px;top:369px;white-space:nowrap;width:74px;text-align:center;font-size:17px;font-weight:500;-webkit-text-stroke:0.35px #222;color:#222;line-height:20px">相位C</div>
<div style="position:absolute;left:290px;top:362px;white-space:nowrap;width:149px;text-align:center;font-size:13px;font-weight:500;-webkit-text-stroke:0.3px #222;color:#222;line-height:16px">计时</div>
<div style="position:absolute;left:290px;top:385px;white-space:nowrap;width:51px;text-align:center;font-family:'Liberation Mono', monospace;font-weight:bold;font-size:12px;color:#222;line-height:14px">H</div>
<div style="position:absolute;left:341px;top:385px;white-space:nowrap;width:49px;text-align:center;font-family:'Liberation Mono', monospace;font-weight:bold;font-size:12px;color:#222;line-height:14px">M</div>
<div style="position:absolute;left:390px;top:385px;white-space:nowrap;width:49px;text-align:center;font-family:'Liberation Mono', monospace;font-weight:bold;font-size:12px;color:#222;line-height:14px">S</div>
<div style="position:absolute;left:18px;top:402px;white-space:nowrap;width:50px;text-align:center;font-size:18px;color:#222;line-height:20px">1</div>
<div style="position:absolute;left:67px;top:405px;white-space:nowrap;width:74px;text-align:right;font-family:'Liberation Serif', serif;font-size:14px;color:#444;line-height:16px">0. 0</div>
<div style="position:absolute;left:142px;top:405px;white-space:nowrap;width:73px;text-align:right;font-family:'Liberation Serif', serif;font-size:14px;color:#444;line-height:16px">0. 0</div>
<div style="position:absolute;left:216px;top:405px;white-space:nowrap;width:73px;text-align:right;font-family:'Liberation Serif', serif;font-size:14px;color:#444;line-height:16px">0. 0</div>
<div style="position:absolute;left:290px;top:405px;white-space:nowrap;width:51px;text-align:center;font-family:'Liberation Mono', monospace;font-size:13px;color:#444;line-height:16px">0</div>
<div style="position:absolute;left:341px;top:405px;white-space:nowrap;width:49px;text-align:center;font-family:'Liberation Mono', monospace;font-size:13px;color:#444;line-height:16px">0</div>
<div style="position:absolute;left:390px;top:405px;white-space:nowrap;width:49px;text-align:center;font-family:'Liberation Mono', monospace;font-size:13px;color:#444;line-height:16px">30</div>
<div style="position:absolute;left:0px;top:442px;width:888px;height:465px;background:#c0c0c0;border-left:1px solid #777"></div>
<div style="position:absolute;left:1px;top:442px;width:886px;height:7px;background:#c6c6c6"></div>
<div style="position:absolute;left:1px;top:449px;width:886px;height:31px;background:#b8b8b8"></div>
<div style="position:absolute;left:3px;top:455px;white-space:nowrap;font-size:19px;color:#1a1a1a;line-height:22px;-webkit-text-stroke:0.3px #1a1a1a">&gt;<span style="margin-left:3px">&gt;</span><span style="margin-left:0px">温度实时趋势</span><span style="margin-left:2px">&gt;</span><span style="margin-left:3.5px">&gt;</span></div>
<div style="position:absolute;left:1px;top:480px;width:886px;height:417px;background:#fdfdfd;border-right:1px solid #888"></div>
<div style="position:absolute;left:7px;top:486px;width:874px;height:411px;background:#eceadb;border-left:1px solid #b8b8b0;border-top:1px solid #555"></div>
<div style="position:absolute;left:8px;top:487px;width:872px;height:30px;background:linear-gradient(#ffffff,#f4f4f0)"></div>
<div style="position:absolute;left:1px;top:897px;width:886px;height:8px;background:#c2c2c2"></div>
<div style="position:absolute;left:0px;top:905px;width:888px;height:2px;background:#fbfbfd"></div>
<svg width="1603" height="907" style="position:absolute;left:0;top:0"><line x1="39.5" y1="854.3" x2="880" y2="854.3" stroke="#e5e2cf" stroke-width="1"/><line x1="39.5" y1="848.6" x2="880" y2="848.6" stroke="#e5e2cf" stroke-width="1"/><line x1="39.5" y1="842.9" x2="880" y2="842.9" stroke="#e5e2cf" stroke-width="1"/><line x1="39.5" y1="831.5" x2="880" y2="831.5" stroke="#e5e2cf" stroke-width="1"/><line x1="39.5" y1="825.8" x2="880" y2="825.8" stroke="#e5e2cf" stroke-width="1"/><line x1="39.5" y1="820.1" x2="880" y2="820.1" stroke="#e5e2cf" stroke-width="1"/><line x1="39.5" y1="808.7" x2="880" y2="808.7" stroke="#e5e2cf" stroke-width="1"/><line x1="39.5" y1="803.0" x2="880" y2="803.0" stroke="#e5e2cf" stroke-width="1"/><line x1="39.5" y1="797.3" x2="880" y2="797.3" stroke="#e5e2cf" stroke-width="1"/><line x1="39.5" y1="785.9" x2="880" y2="785.9" stroke="#e5e2cf" stroke-width="1"/><line x1="39.5" y1="780.2" x2="880" y2="780.2" stroke="#e5e2cf" stroke-width="1"/><line x1="39.5" y1="774.5" x2="880" y2="774.5" stroke="#e5e2cf" stroke-width="1"/><line x1="39.5" y1="763.2" x2="880" y2="763.2" stroke="#e5e2cf" stroke-width="1"/><line x1="39.5" y1="757.5" x2="880" y2="757.5" stroke="#e5e2cf" stroke-width="1"/><line x1="39.5" y1="751.8" x2="880" y2="751.8" stroke="#e5e2cf" stroke-width="1"/><line x1="39.5" y1="740.4" x2="880" y2="740.4" stroke="#e5e2cf" stroke-width="1"/><line x1="39.5" y1="734.7" x2="880" y2="734.7" stroke="#e5e2cf" stroke-width="1"/><line x1="39.5" y1="729.0" x2="880" y2="729.0" stroke="#e5e2cf" stroke-width="1"/><line x1="39.5" y1="717.6" x2="880" y2="717.6" stroke="#e5e2cf" stroke-width="1"/><line x1="39.5" y1="711.9" x2="880" y2="711.9" stroke="#e5e2cf" stroke-width="1"/><line x1="39.5" y1="706.2" x2="880" y2="706.2" stroke="#e5e2cf" stroke-width="1"/><line x1="39.5" y1="694.8" x2="880" y2="694.8" stroke="#e5e2cf" stroke-width="1"/><line x1="39.5" y1="689.1" x2="880" y2="689.1" stroke="#e5e2cf" stroke-width="1"/><line x1="39.5" y1="683.4" x2="880" y2="683.4" stroke="#e5e2cf" stroke-width="1"/><line x1="39.5" y1="672.0" x2="880" y2="672.0" stroke="#e5e2cf" stroke-width="1"/><line x1="39.5" y1="666.3" x2="880" y2="666.3" stroke="#e5e2cf" stroke-width="1"/><line x1="39.5" y1="660.6" x2="880" y2="660.6" stroke="#e5e2cf" stroke-width="1"/><line x1="39.5" y1="649.2" x2="880" y2="649.2" stroke="#e5e2cf" stroke-width="1"/><line x1="39.5" y1="643.5" x2="880" y2="643.5" stroke="#e5e2cf" stroke-width="1"/><line x1="39.5" y1="637.8" x2="880" y2="637.8" stroke="#e5e2cf" stroke-width="1"/><line x1="39.5" y1="626.4" x2="880" y2="626.4" stroke="#e5e2cf" stroke-width="1"/><line x1="39.5" y1="620.7" x2="880" y2="620.7" stroke="#e5e2cf" stroke-width="1"/><line x1="39.5" y1="615.0" x2="880" y2="615.0" stroke="#e5e2cf" stroke-width="1"/><line x1="39.5" y1="603.7" x2="880" y2="603.7" stroke="#e5e2cf" stroke-width="1"/><line x1="39.5" y1="598.0" x2="880" y2="598.0" stroke="#e5e2cf" stroke-width="1"/><line x1="39.5" y1="592.3" x2="880" y2="592.3" stroke="#e5e2cf" stroke-width="1"/><line x1="39.5" y1="580.9" x2="880" y2="580.9" stroke="#e5e2cf" stroke-width="1"/><line x1="39.5" y1="575.2" x2="880" y2="575.2" stroke="#e5e2cf" stroke-width="1"/><line x1="39.5" y1="569.5" x2="880" y2="569.5" stroke="#e5e2cf" stroke-width="1"/><line x1="39.5" y1="558.1" x2="880" y2="558.1" stroke="#e5e2cf" stroke-width="1"/><line x1="39.5" y1="552.4" x2="880" y2="552.4" stroke="#e5e2cf" stroke-width="1"/><line x1="39.5" y1="546.7" x2="880" y2="546.7" stroke="#e5e2cf" stroke-width="1"/><line x1="39.5" y1="535.3" x2="880" y2="535.3" stroke="#e5e2cf" stroke-width="1"/><line x1="39.5" y1="529.6" x2="880" y2="529.6" stroke="#e5e2cf" stroke-width="1"/><line x1="39.5" y1="523.9" x2="880" y2="523.9" stroke="#e5e2cf" stroke-width="1"/><line x1="40.2" y1="518" x2="40.2" y2="860.5" stroke="#e4e1ce" stroke-width="1"/><line x1="68.2" y1="518" x2="68.2" y2="860.5" stroke="#e4e1ce" stroke-width="1"/><line x1="82.1" y1="518" x2="82.1" y2="860.5" stroke="#e4e1ce" stroke-width="1"/><line x1="96.1" y1="518" x2="96.1" y2="860.5" stroke="#e4e1ce" stroke-width="1"/><line x1="110.1" y1="518" x2="110.1" y2="860.5" stroke="#e4e1ce" stroke-width="1"/><line x1="138.0" y1="518" x2="138.0" y2="860.5" stroke="#e4e1ce" stroke-width="1"/><line x1="152.0" y1="518" x2="152.0" y2="860.5" stroke="#e4e1ce" stroke-width="1"/><line x1="166.0" y1="518" x2="166.0" y2="860.5" stroke="#e4e1ce" stroke-width="1"/><line x1="179.9" y1="518" x2="179.9" y2="860.5" stroke="#e4e1ce" stroke-width="1"/><line x1="207.9" y1="518" x2="207.9" y2="860.5" stroke="#e4e1ce" stroke-width="1"/><line x1="221.8" y1="518" x2="221.8" y2="860.5" stroke="#e4e1ce" stroke-width="1"/><line x1="235.8" y1="518" x2="235.8" y2="860.5" stroke="#e4e1ce" stroke-width="1"/><line x1="249.8" y1="518" x2="249.8" y2="860.5" stroke="#e4e1ce" stroke-width="1"/><line x1="277.7" y1="518" x2="277.7" y2="860.5" stroke="#e4e1ce" stroke-width="1"/><line x1="291.7" y1="518" x2="291.7" y2="860.5" stroke="#e4e1ce" stroke-width="1"/><line x1="305.7" y1="518" x2="305.7" y2="860.5" stroke="#e4e1ce" stroke-width="1"/><line x1="319.6" y1="518" x2="319.6" y2="860.5" stroke="#e4e1ce" stroke-width="1"/><line x1="347.6" y1="518" x2="347.6" y2="860.5" stroke="#e4e1ce" stroke-width="1"/><line x1="361.5" y1="518" x2="361.5" y2="860.5" stroke="#e4e1ce" stroke-width="1"/><line x1="375.5" y1="518" x2="375.5" y2="860.5" stroke="#e4e1ce" stroke-width="1"/><line x1="389.5" y1="518" x2="389.5" y2="860.5" stroke="#e4e1ce" stroke-width="1"/><line x1="417.4" y1="518" x2="417.4" y2="860.5" stroke="#e4e1ce" stroke-width="1"/><line x1="431.4" y1="518" x2="431.4" y2="860.5" stroke="#e4e1ce" stroke-width="1"/><line x1="445.4" y1="518" x2="445.4" y2="860.5" stroke="#e4e1ce" stroke-width="1"/><line x1="459.3" y1="518" x2="459.3" y2="860.5" stroke="#e4e1ce" stroke-width="1"/><line x1="487.3" y1="518" x2="487.3" y2="860.5" stroke="#e4e1ce" stroke-width="1"/><line x1="501.2" y1="518" x2="501.2" y2="860.5" stroke="#e4e1ce" stroke-width="1"/><line x1="515.2" y1="518" x2="515.2" y2="860.5" stroke="#e4e1ce" stroke-width="1"/><line x1="529.2" y1="518" x2="529.2" y2="860.5" stroke="#e4e1ce" stroke-width="1"/><line x1="557.1" y1="518" x2="557.1" y2="860.5" stroke="#e4e1ce" stroke-width="1"/><line x1="571.1" y1="518" x2="571.1" y2="860.5" stroke="#e4e1ce" stroke-width="1"/><line x1="585.1" y1="518" x2="585.1" y2="860.5" stroke="#e4e1ce" stroke-width="1"/><line x1="599.0" y1="518" x2="599.0" y2="860.5" stroke="#e4e1ce" stroke-width="1"/><line x1="627.0" y1="518" x2="627.0" y2="860.5" stroke="#e4e1ce" stroke-width="1"/><line x1="640.9" y1="518" x2="640.9" y2="860.5" stroke="#e4e1ce" stroke-width="1"/><line x1="654.9" y1="518" x2="654.9" y2="860.5" stroke="#e4e1ce" stroke-width="1"/><line x1="668.9" y1="518" x2="668.9" y2="860.5" stroke="#e4e1ce" stroke-width="1"/><line x1="696.8" y1="518" x2="696.8" y2="860.5" stroke="#e4e1ce" stroke-width="1"/><line x1="710.8" y1="518" x2="710.8" y2="860.5" stroke="#e4e1ce" stroke-width="1"/><line x1="724.8" y1="518" x2="724.8" y2="860.5" stroke="#e4e1ce" stroke-width="1"/><line x1="738.7" y1="518" x2="738.7" y2="860.5" stroke="#e4e1ce" stroke-width="1"/><line x1="766.7" y1="518" x2="766.7" y2="860.5" stroke="#e4e1ce" stroke-width="1"/><line x1="780.6" y1="518" x2="780.6" y2="860.5" stroke="#e4e1ce" stroke-width="1"/><line x1="794.6" y1="518" x2="794.6" y2="860.5" stroke="#e4e1ce" stroke-width="1"/><line x1="808.6" y1="518" x2="808.6" y2="860.5" stroke="#e4e1ce" stroke-width="1"/><line x1="836.5" y1="518" x2="836.5" y2="860.5" stroke="#e4e1ce" stroke-width="1"/><line x1="850.5" y1="518" x2="850.5" y2="860.5" stroke="#e4e1ce" stroke-width="1"/><line x1="864.5" y1="518" x2="864.5" y2="860.5" stroke="#e4e1ce" stroke-width="1"/><line x1="878.4" y1="518" x2="878.4" y2="860.5" stroke="#e4e1ce" stroke-width="1"/><line x1="39.5" y1="860.5" x2="880" y2="860.5" stroke="#c0bca6" stroke-width="1"/><line x1="39.5" y1="837.5" x2="880" y2="837.5" stroke="#c0bca6" stroke-width="1"/><line x1="39.5" y1="814.5" x2="880" y2="814.5" stroke="#c0bca6" stroke-width="1"/><line x1="39.5" y1="791.5" x2="880" y2="791.5" stroke="#c0bca6" stroke-width="1"/><line x1="39.5" y1="768.5" x2="880" y2="768.5" stroke="#c0bca6" stroke-width="1"/><line x1="39.5" y1="746.5" x2="880" y2="746.5" stroke="#c0bca6" stroke-width="1"/><line x1="39.5" y1="723.5" x2="880" y2="723.5" stroke="#c0bca6" stroke-width="1"/><line x1="39.5" y1="700.5" x2="880" y2="700.5" stroke="#c0bca6" stroke-width="1"/><line x1="39.5" y1="677.5" x2="880" y2="677.5" stroke="#c0bca6" stroke-width="1"/><line x1="39.5" y1="654.5" x2="880" y2="654.5" stroke="#c0bca6" stroke-width="1"/><line x1="39.5" y1="632.5" x2="880" y2="632.5" stroke="#c0bca6" stroke-width="1"/><line x1="39.5" y1="609.5" x2="880" y2="609.5" stroke="#c0bca6" stroke-width="1"/><line x1="39.5" y1="586.5" x2="880" y2="586.5" stroke="#c0bca6" stroke-width="1"/><line x1="39.5" y1="563.5" x2="880" y2="563.5" stroke="#c0bca6" stroke-width="1"/><line x1="39.5" y1="540.5" x2="880" y2="540.5" stroke="#c0bca6" stroke-width="1"/><line x1="39.5" y1="518.5" x2="880" y2="518.5" stroke="#c0bca6" stroke-width="1"/><line x1="54.5" y1="518" x2="54.5" y2="860.5" stroke="#a6a290" stroke-width="1"/><line x1="124.5" y1="518" x2="124.5" y2="860.5" stroke="#a6a290" stroke-width="1"/><line x1="193.5" y1="518" x2="193.5" y2="860.5" stroke="#a6a290" stroke-width="1"/><line x1="263.5" y1="518" x2="263.5" y2="860.5" stroke="#a6a290" stroke-width="1"/><line x1="333.5" y1="518" x2="333.5" y2="860.5" stroke="#a6a290" stroke-width="1"/><line x1="403.5" y1="518" x2="403.5" y2="860.5" stroke="#a6a290" stroke-width="1"/><line x1="473.5" y1="518" x2="473.5" y2="860.5" stroke="#a6a290" stroke-width="1"/><line x1="543.5" y1="518" x2="543.5" y2="860.5" stroke="#a6a290" stroke-width="1"/><line x1="613.5" y1="518" x2="613.5" y2="860.5" stroke="#a6a290" stroke-width="1"/><line x1="682.5" y1="518" x2="682.5" y2="860.5" stroke="#a6a290" stroke-width="1"/><line x1="752.5" y1="518" x2="752.5" y2="860.5" stroke="#a6a290" stroke-width="1"/><line x1="822.5" y1="518" x2="822.5" y2="860.5" stroke="#a6a290" stroke-width="1"/><line x1="39.5" y1="518" x2="39.5" y2="897.5" stroke="#555" stroke-width="1"/><line x1="8" y1="860.5" x2="880" y2="860.5" stroke="#666" stroke-width="1.2"/><line x1="34.5" y1="860.0" x2="39.5" y2="860.0" stroke="#333" stroke-width="1"/><line x1="37.0" y1="854.3" x2="39.5" y2="854.3" stroke="#333" stroke-width="1"/><line x1="37.0" y1="848.6" x2="39.5" y2="848.6" stroke="#333" stroke-width="1"/><line x1="37.0" y1="842.9" x2="39.5" y2="842.9" stroke="#333" stroke-width="1"/><line x1="34.5" y1="837.2" x2="39.5" y2="837.2" stroke="#333" stroke-width="1"/><line x1="37.0" y1="831.5" x2="39.5" y2="831.5" stroke="#333" stroke-width="1"/><line x1="37.0" y1="825.8" x2="39.5" y2="825.8" stroke="#333" stroke-width="1"/><line x1="37.0" y1="820.1" x2="39.5" y2="820.1" stroke="#333" stroke-width="1"/><line x1="34.5" y1="814.4" x2="39.5" y2="814.4" stroke="#333" stroke-width="1"/><line x1="37.0" y1="808.7" x2="39.5" y2="808.7" stroke="#333" stroke-width="1"/><line x1="37.0" y1="803.0" x2="39.5" y2="803.0" stroke="#333" stroke-width="1"/><line x1="37.0" y1="797.3" x2="39.5" y2="797.3" stroke="#333" stroke-width="1"/><line x1="34.5" y1="791.6" x2="39.5" y2="791.6" stroke="#333" stroke-width="1"/><line x1="37.0" y1="785.9" x2="39.5" y2="785.9" stroke="#333" stroke-width="1"/><line x1="37.0" y1="780.2" x2="39.5" y2="780.2" stroke="#333" stroke-width="1"/><line x1="37.0" y1="774.5" x2="39.5" y2="774.5" stroke="#333" stroke-width="1"/><line x1="34.5" y1="768.9" x2="39.5" y2="768.9" stroke="#333" stroke-width="1"/><line x1="37.0" y1="763.2" x2="39.5" y2="763.2" stroke="#333" stroke-width="1"/><line x1="37.0" y1="757.5" x2="39.5" y2="757.5" stroke="#333" stroke-width="1"/><line x1="37.0" y1="751.8" x2="39.5" y2="751.8" stroke="#333" stroke-width="1"/><line x1="34.5" y1="746.1" x2="39.5" y2="746.1" stroke="#333" stroke-width="1"/><line x1="37.0" y1="740.4" x2="39.5" y2="740.4" stroke="#333" stroke-width="1"/><line x1="37.0" y1="734.7" x2="39.5" y2="734.7" stroke="#333" stroke-width="1"/><line x1="37.0" y1="729.0" x2="39.5" y2="729.0" stroke="#333" stroke-width="1"/><line x1="34.5" y1="723.3" x2="39.5" y2="723.3" stroke="#333" stroke-width="1"/><line x1="37.0" y1="717.6" x2="39.5" y2="717.6" stroke="#333" stroke-width="1"/><line x1="37.0" y1="711.9" x2="39.5" y2="711.9" stroke="#333" stroke-width="1"/><line x1="37.0" y1="706.2" x2="39.5" y2="706.2" stroke="#333" stroke-width="1"/><line x1="34.5" y1="700.5" x2="39.5" y2="700.5" stroke="#333" stroke-width="1"/><line x1="37.0" y1="694.8" x2="39.5" y2="694.8" stroke="#333" stroke-width="1"/><line x1="37.0" y1="689.1" x2="39.5" y2="689.1" stroke="#333" stroke-width="1"/><line x1="37.0" y1="683.4" x2="39.5" y2="683.4" stroke="#333" stroke-width="1"/><line x1="34.5" y1="677.7" x2="39.5" y2="677.7" stroke="#333" stroke-width="1"/><line x1="37.0" y1="672.0" x2="39.5" y2="672.0" stroke="#333" stroke-width="1"/><line x1="37.0" y1="666.3" x2="39.5" y2="666.3" stroke="#333" stroke-width="1"/><line x1="37.0" y1="660.6" x2="39.5" y2="660.6" stroke="#333" stroke-width="1"/><line x1="34.5" y1="654.9" x2="39.5" y2="654.9" stroke="#333" stroke-width="1"/><line x1="37.0" y1="649.2" x2="39.5" y2="649.2" stroke="#333" stroke-width="1"/><line x1="37.0" y1="643.5" x2="39.5" y2="643.5" stroke="#333" stroke-width="1"/><line x1="37.0" y1="637.8" x2="39.5" y2="637.8" stroke="#333" stroke-width="1"/><line x1="34.5" y1="632.1" x2="39.5" y2="632.1" stroke="#333" stroke-width="1"/><line x1="37.0" y1="626.4" x2="39.5" y2="626.4" stroke="#333" stroke-width="1"/><line x1="37.0" y1="620.7" x2="39.5" y2="620.7" stroke="#333" stroke-width="1"/><line x1="37.0" y1="615.0" x2="39.5" y2="615.0" stroke="#333" stroke-width="1"/><line x1="34.5" y1="609.3" x2="39.5" y2="609.3" stroke="#333" stroke-width="1"/><line x1="37.0" y1="603.7" x2="39.5" y2="603.7" stroke="#333" stroke-width="1"/><line x1="37.0" y1="598.0" x2="39.5" y2="598.0" stroke="#333" stroke-width="1"/><line x1="37.0" y1="592.3" x2="39.5" y2="592.3" stroke="#333" stroke-width="1"/><line x1="34.5" y1="586.6" x2="39.5" y2="586.6" stroke="#333" stroke-width="1"/><line x1="37.0" y1="580.9" x2="39.5" y2="580.9" stroke="#333" stroke-width="1"/><line x1="37.0" y1="575.2" x2="39.5" y2="575.2" stroke="#333" stroke-width="1"/><line x1="37.0" y1="569.5" x2="39.5" y2="569.5" stroke="#333" stroke-width="1"/><line x1="34.5" y1="563.8" x2="39.5" y2="563.8" stroke="#333" stroke-width="1"/><line x1="37.0" y1="558.1" x2="39.5" y2="558.1" stroke="#333" stroke-width="1"/><line x1="37.0" y1="552.4" x2="39.5" y2="552.4" stroke="#333" stroke-width="1"/><line x1="37.0" y1="546.7" x2="39.5" y2="546.7" stroke="#333" stroke-width="1"/><line x1="34.5" y1="541.0" x2="39.5" y2="541.0" stroke="#333" stroke-width="1"/><line x1="37.0" y1="535.3" x2="39.5" y2="535.3" stroke="#333" stroke-width="1"/><line x1="37.0" y1="529.6" x2="39.5" y2="529.6" stroke="#333" stroke-width="1"/><line x1="37.0" y1="523.9" x2="39.5" y2="523.9" stroke="#333" stroke-width="1"/><line x1="34.5" y1="518.2" x2="39.5" y2="518.2" stroke="#333" stroke-width="1"/><text x="30" y="856.5" text-anchor="end" font-family="Liberation Sans" font-size="9.5" fill="#222">0</text><text x="30" y="840.7" text-anchor="end" font-family="Liberation Sans" font-size="9.5" fill="#222">20</text><text x="30" y="817.9" text-anchor="end" font-family="Liberation Sans" font-size="9.5" fill="#222">40</text><text x="30" y="795.1" text-anchor="end" font-family="Liberation Sans" font-size="9.5" fill="#222">60</text><text x="30" y="772.4" text-anchor="end" font-family="Liberation Sans" font-size="9.5" fill="#222">80</text><text x="30" y="749.6" text-anchor="end" font-family="Liberation Sans" font-size="9.5" fill="#222">100</text><text x="30" y="726.8" text-anchor="end" font-family="Liberation Sans" font-size="9.5" fill="#222">120</text><text x="30" y="704.0" text-anchor="end" font-family="Liberation Sans" font-size="9.5" fill="#222">140</text><text x="30" y="681.2" text-anchor="end" font-family="Liberation Sans" font-size="9.5" fill="#222">160</text><text x="30" y="658.4" text-anchor="end" font-family="Liberation Sans" font-size="9.5" fill="#222">180</text><text x="30" y="635.6" text-anchor="end" font-family="Liberation Sans" font-size="9.5" fill="#222">200</text><text x="30" y="612.8" text-anchor="end" font-family="Liberation Sans" font-size="9.5" fill="#222">220</text><text x="30" y="590.1" text-anchor="end" font-family="Liberation Sans" font-size="9.5" fill="#222">240</text><text x="30" y="567.3" text-anchor="end" font-family="Liberation Sans" font-size="9.5" fill="#222">260</text><text x="30" y="544.5" text-anchor="end" font-family="Liberation Sans" font-size="9.5" fill="#222">280</text><text x="30" y="527.0" text-anchor="end" font-family="Liberation Sans" font-size="9.5" fill="#222">300</text><line x1="40.2" y1="860.5" x2="40.2" y2="863.5" stroke="#333" stroke-width="1"/><line x1="54.2" y1="860.5" x2="54.2" y2="866.5" stroke="#333" stroke-width="1"/><line x1="68.2" y1="860.5" x2="68.2" y2="863.5" stroke="#333" stroke-width="1"/><line x1="82.1" y1="860.5" x2="82.1" y2="863.5" stroke="#333" stroke-width="1"/><line x1="96.1" y1="860.5" x2="96.1" y2="863.5" stroke="#333" stroke-width="1"/><line x1="110.1" y1="860.5" x2="110.1" y2="863.5" stroke="#333" stroke-width="1"/><line x1="124.0" y1="860.5" x2="124.0" y2="866.5" stroke="#333" stroke-width="1"/><line x1="138.0" y1="860.5" x2="138.0" y2="863.5" stroke="#333" stroke-width="1"/><line x1="152.0" y1="860.5" x2="152.0" y2="863.5" stroke="#333" stroke-width="1"/><line x1="166.0" y1="860.5" x2="166.0" y2="863.5" stroke="#333" stroke-width="1"/><line x1="179.9" y1="860.5" x2="179.9" y2="863.5" stroke="#333" stroke-width="1"/><line x1="193.9" y1="860.5" x2="193.9" y2="866.5" stroke="#333" stroke-width="1"/><line x1="207.9" y1="860.5" x2="207.9" y2="863.5" stroke="#333" stroke-width="1"/><line x1="221.8" y1="860.5" x2="221.8" y2="863.5" stroke="#333" stroke-width="1"/><line x1="235.8" y1="860.5" x2="235.8" y2="863.5" stroke="#333" stroke-width="1"/><line x1="249.8" y1="860.5" x2="249.8" y2="863.5" stroke="#333" stroke-width="1"/><line x1="263.8" y1="860.5" x2="263.8" y2="866.5" stroke="#333" stroke-width="1"/><line x1="277.7" y1="860.5" x2="277.7" y2="863.5" stroke="#333" stroke-width="1"/><line x1="291.7" y1="860.5" x2="291.7" y2="863.5" stroke="#333" stroke-width="1"/><line x1="305.7" y1="860.5" x2="305.7" y2="863.5" stroke="#333" stroke-width="1"/><line x1="319.6" y1="860.5" x2="319.6" y2="863.5" stroke="#333" stroke-width="1"/><line x1="333.6" y1="860.5" x2="333.6" y2="866.5" stroke="#333" stroke-width="1"/><line x1="347.6" y1="860.5" x2="347.6" y2="863.5" stroke="#333" stroke-width="1"/><line x1="361.5" y1="860.5" x2="361.5" y2="863.5" stroke="#333" stroke-width="1"/><line x1="375.5" y1="860.5" x2="375.5" y2="863.5" stroke="#333" stroke-width="1"/><line x1="389.5" y1="860.5" x2="389.5" y2="863.5" stroke="#333" stroke-width="1"/><line x1="403.4" y1="860.5" x2="403.4" y2="866.5" stroke="#333" stroke-width="1"/><line x1="417.4" y1="860.5" x2="417.4" y2="863.5" stroke="#333" stroke-width="1"/><line x1="431.4" y1="860.5" x2="431.4" y2="863.5" stroke="#333" stroke-width="1"/><line x1="445.4" y1="860.5" x2="445.4" y2="863.5" stroke="#333" stroke-width="1"/><line x1="459.3" y1="860.5" x2="459.3" y2="863.5" stroke="#333" stroke-width="1"/><line x1="473.3" y1="860.5" x2="473.3" y2="866.5" stroke="#333" stroke-width="1"/><line x1="487.3" y1="860.5" x2="487.3" y2="863.5" stroke="#333" stroke-width="1"/><line x1="501.2" y1="860.5" x2="501.2" y2="863.5" stroke="#333" stroke-width="1"/><line x1="515.2" y1="860.5" x2="515.2" y2="863.5" stroke="#333" stroke-width="1"/><line x1="529.2" y1="860.5" x2="529.2" y2="863.5" stroke="#333" stroke-width="1"/><line x1="543.1" y1="860.5" x2="543.1" y2="866.5" stroke="#333" stroke-width="1"/><line x1="557.1" y1="860.5" x2="557.1" y2="863.5" stroke="#333" stroke-width="1"/><line x1="571.1" y1="860.5" x2="571.1" y2="863.5" stroke="#333" stroke-width="1"/><line x1="585.1" y1="860.5" x2="585.1" y2="863.5" stroke="#333" stroke-width="1"/><line x1="599.0" y1="860.5" x2="599.0" y2="863.5" stroke="#333" stroke-width="1"/><line x1="613.0" y1="860.5" x2="613.0" y2="866.5" stroke="#333" stroke-width="1"/><line x1="627.0" y1="860.5" x2="627.0" y2="863.5" stroke="#333" stroke-width="1"/><line x1="640.9" y1="860.5" x2="640.9" y2="863.5" stroke="#333" stroke-width="1"/><line x1="654.9" y1="860.5" x2="654.9" y2="863.5" stroke="#333" stroke-width="1"/><line x1="668.9" y1="860.5" x2="668.9" y2="863.5" stroke="#333" stroke-width="1"/><line x1="682.9" y1="860.5" x2="682.9" y2="866.5" stroke="#333" stroke-width="1"/><line x1="696.8" y1="860.5" x2="696.8" y2="863.5" stroke="#333" stroke-width="1"/><line x1="710.8" y1="860.5" x2="710.8" y2="863.5" stroke="#333" stroke-width="1"/><line x1="724.8" y1="860.5" x2="724.8" y2="863.5" stroke="#333" stroke-width="1"/><line x1="738.7" y1="860.5" x2="738.7" y2="863.5" stroke="#333" stroke-width="1"/><line x1="752.7" y1="860.5" x2="752.7" y2="866.5" stroke="#333" stroke-width="1"/><line x1="766.7" y1="860.5" x2="766.7" y2="863.5" stroke="#333" stroke-width="1"/><line x1="780.6" y1="860.5" x2="780.6" y2="863.5" stroke="#333" stroke-width="1"/><line x1="794.6" y1="860.5" x2="794.6" y2="863.5" stroke="#333" stroke-width="1"/><line x1="808.6" y1="860.5" x2="808.6" y2="863.5" stroke="#333" stroke-width="1"/><line x1="822.5" y1="860.5" x2="822.5" y2="866.5" stroke="#333" stroke-width="1"/><line x1="836.5" y1="860.5" x2="836.5" y2="863.5" stroke="#333" stroke-width="1"/><line x1="850.5" y1="860.5" x2="850.5" y2="863.5" stroke="#333" stroke-width="1"/><line x1="864.5" y1="860.5" x2="864.5" y2="863.5" stroke="#333" stroke-width="1"/><line x1="878.4" y1="860.5" x2="878.4" y2="863.5" stroke="#333" stroke-width="1"/><clipPath id="cp"><rect x="39.5" y="860.5" width="840.5" height="40"/></clipPath><g clip-path="url(#cp)" font-family="Liberation Sans" font-size="10.5" letter-spacing="0.6" fill="#222" text-anchor="middle"><text x="53.2" y="879.5">8:59:20</text><text x="53.2" y="891.8">2022/11/2</text><text x="123.0" y="879.5">8:59:25</text><text x="123.0" y="891.8">2022/11/2</text><text x="192.9" y="879.5">8:59:30</text><text x="192.9" y="891.8">2022/11/2</text><text x="262.8" y="879.5">8:59:35</text><text x="262.8" y="891.8">2022/11/2</text><text x="332.6" y="879.5">8:59:40</text><text x="332.6" y="891.8">2022/11/2</text><text x="402.4" y="879.5">8:59:45</text><text x="402.4" y="891.8">2022/11/2</text><text x="472.3" y="879.5">8:59:50</text><text x="472.3" y="891.8">2022/11/2</text><text x="542.1" y="879.5">8:59:55</text><text x="542.1" y="891.8">2022/11/2</text><text x="612.0" y="879.5">9:00:00</text><text x="612.0" y="891.8">2022/11/2</text><text x="681.9" y="879.5">9:00:05</text><text x="681.9" y="891.8">2022/11/2</text><text x="751.7" y="879.5">9:00:10</text><text x="751.7" y="891.8">2022/11/2</text><text x="821.5" y="879.5">9:00:15</text><text x="821.5" y="891.8">2022/11/2</text><text x="891.4" y="879.5">9:00:20</text><text x="891.4" y="891.8">2022/11/2</text></g><line x1="864.5" y1="843.7" x2="880" y2="843.7" stroke="#e01010" stroke-width="1.5"/><circle cx="865" cy="843.7" r="1.5" fill="#e01010"/><circle cx="879" cy="843.7" r="1.5" fill="#e01010"/><line x1="864.5" y1="858.5" x2="880" y2="858.5" stroke="#f0e040" stroke-width="1.5"/><line x1="16" y1="867.7" x2="31.5" y2="867.7" stroke="#e03030" stroke-width="1"/></svg>
<svg width="700" height="32" style="position:absolute;left:0;top:486px"><circle cx="28.5" cy="15.399999999999977" r="8.6" fill="#d4d4d4" stroke="#bdbdbd" stroke-width="1.2"/><text x="28.5" y="20" text-anchor="middle" font-family="Liberation Sans" font-weight="bold" font-size="12" fill="#f4f4f4">?</text><rect x="46" y="6.5" width="16.5" height="18" fill="#fff" stroke="#6878a0" stroke-width="1"/><rect x="46" y="6.5" width="16.5" height="4.5" fill="#e04848"/><line x1="48" y1="14" x2="54" y2="14" stroke="#c8d8a8"/><line x1="48" y1="17" x2="53" y2="17" stroke="#e8b0b0"/><line x1="48" y1="20" x2="53" y2="20" stroke="#c8d8a8"/><path d="M51 17.5 L55.5 13 L55.5 15.5 L61 15.5 L61 19.5 L55.5 19.5 L55.5 22 Z" fill="#3c78d8"/><line x1="70.2" y1="5.5" x2="70.2" y2="26" stroke="#a8a8a8" stroke-width="1.2"/><rect x="80.5" y="11" width="2.5" height="10" fill="#cbcbcb"/><path d="M83 16 L92.5 11 L92.5 21 Z" fill="#cbcbcb"/><path d="M104 16 L112 11 L112 21 Z M112 16 L120 11 L120 21 Z" fill="#cbcbcb"/><path d="M130 11 L138 16 L130 21 Z M138 11 L146.5 16 L138 21 Z" fill="#cbcbcb"/><path d="M157.5 11 L167 16 L157.5 21 Z" fill="#cbcbcb"/><rect x="167" y="11" width="2.5" height="10" fill="#cbcbcb"/><line x1="179.2" y1="5.5" x2="179.2" y2="26" stroke="#a8a8a8" stroke-width="1.2"/><line x1="198.7" y1="17.19999999999999" x2="203.7" y2="25.19999999999999" stroke="#8a8a8a" stroke-width="2.2" stroke-linecap="round"/><circle cx="194.7" cy="12.699999999999989" r="6" fill="#e8f8ee" stroke="#8a9a90" stroke-width="1.5"/><rect x="191.7" y="9.699999999999989" width="6" height="6" fill="#6ad08a" stroke="#208040" stroke-width="1.2"/><line x1="223.8" y1="17.19999999999999" x2="228.8" y2="25.19999999999999" stroke="#8a8a8a" stroke-width="2.2" stroke-linecap="round"/><circle cx="219.8" cy="12.699999999999989" r="6" fill="#e8f8ee" stroke="#8a9a90" stroke-width="1.5"/><path d="M216.3 12.699999999999989 H223.3 M219.8 9.199999999999989 V16.19999999999999" stroke="#14a040" stroke-width="2"/><line x1="249.8" y1="17.19999999999999" x2="254.8" y2="25.19999999999999" stroke="#8a8a8a" stroke-width="2.2" stroke-linecap="round"/><circle cx="245.8" cy="12.699999999999989" r="6" fill="#e8f8ee" stroke="#8a9a90" stroke-width="1.5"/><path d="M241.8 12.699999999999989 L244.3 10.199999999999989 V15.199999999999989 Z M249.8 12.699999999999989 L247.3 10.199999999999989 V15.199999999999989 Z" fill="#14a040" stroke="#14a040"/><line x1="243.8" y1="12.699999999999989" x2="247.8" y2="12.699999999999989" stroke="#14a040" stroke-width="1.5"/><line x1="276.3" y1="17.19999999999999" x2="281.3" y2="25.19999999999999" stroke="#8a8a8a" stroke-width="2.2" stroke-linecap="round"/><circle cx="272.3" cy="12.699999999999989" r="6" fill="#e8f8ee" stroke="#8a9a90" stroke-width="1.5"/><path d="M272.3 8.699999999999989 L269.8 11.199999999999989 H274.8 Z M272.3 16.69999999999999 L269.8 14.199999999999989 H274.8 Z" fill="#14a040" stroke="#14a040"/><line x1="272.3" y1="10.699999999999989" x2="272.3" y2="14.699999999999989" stroke="#14a040" stroke-width="1.5"/><path d="M299 6 L303 10 H300.5 V13.5 H304 V11 L308 15 L304 19 V16.5 H300.5 V20 H303 L299 24 L295 20 H297.5 V16.5 H294 V19 L290 15 L294 11 V13.5 H297.5 V10 H295 Z" fill="#7aa8ea" stroke="#4a78c8" stroke-width="0.8"/><path d="M319.8 6 L323.8 11 H321.3 V20 H323.8 L319.8 25 L315.8 20 H318.3 V11 H315.8 Z" fill="#7aa8ea" stroke="#4a78c8" stroke-width="0.8"/><rect x="325" y="5.800000000000011" width="6" height="19.19999999999999" fill="#f0c868" stroke="#b08830" stroke-width="0.8"/><line x1="325.5" y1="8.5" x2="328" y2="8.5" stroke="#906018" stroke-width="0.9"/><line x1="325.5" y1="10.5" x2="329.5" y2="10.5" stroke="#906018" stroke-width="0.9"/><line x1="325.5" y1="12.5" x2="328" y2="12.5" stroke="#906018" stroke-width="0.9"/><line x1="325.5" y1="14.5" x2="329.5" y2="14.5" stroke="#906018" stroke-width="0.9"/><line x1="325.5" y1="16.5" x2="328" y2="16.5" stroke="#906018" stroke-width="0.9"/><line x1="325.5" y1="18.5" x2="329.5" y2="18.5" stroke="#906018" stroke-width="0.9"/><line x1="325.5" y1="20.5" x2="328" y2="20.5" stroke="#906018" stroke-width="0.9"/><line x1="325.5" y1="22.5" x2="329.5" y2="22.5" stroke="#906018" stroke-width="0.9"/><rect x="341.5" y="7.5" width="16.5" height="16.5" rx="2" fill="#f2f2f2" stroke="#cfcfcf" stroke-width="1.2"/><rect x="344.5" y="10.5" width="10.5" height="10.5" fill="#d2d2d2"/><text x="349.7" y="19" text-anchor="middle" font-family="Liberation Sans" font-size="7" font-weight="bold" fill="#f4f4f4">1:1</text><line x1="366" y1="5.5" x2="366" y2="26" stroke="#a8a8a8" stroke-width="1.2"/><rect x="372.5" y="6" width="8.5" height="19.5" rx="1" fill="#8c9cac" stroke="#6c7c8c" stroke-width="0.6"/><rect x="374.5" y="8" width="4.5" height="7" fill="#e8eef4"/><line x1="373.5" y1="16" x2="380.0" y2="16" stroke="#c05080" stroke-width="1.2"/><circle cx="376.75" cy="21" r="1.8" fill="#fff" stroke="#223" stroke-width="0.8"/><rect x="383" y="6" width="8.5" height="19.5" rx="1" fill="#8c9cac" stroke="#6c7c8c" stroke-width="0.6"/><rect x="385" y="8" width="4.5" height="7" fill="#e8eef4"/><line x1="384" y1="16" x2="390.5" y2="16" stroke="#c05080" stroke-width="1.2"/><circle cx="387.25" cy="21" r="1.8" fill="#fff" stroke="#223" stroke-width="0.8"/><rect x="398.5" y="6.5" width="18.5" height="18" fill="#f4f4f4" stroke="#a8a8a8" stroke-width="0.8"/><line x1="404.7" y1="6.5" x2="404.7" y2="24.5" stroke="#b8b8b8" stroke-width="0.8"/><line x1="398.5" y1="12.5" x2="417.0" y2="12.5" stroke="#b8b8b8" stroke-width="0.8"/><line x1="410.9" y1="6.5" x2="410.9" y2="24.5" stroke="#b8b8b8" stroke-width="0.8"/><line x1="398.5" y1="18.5" x2="417.0" y2="18.5" stroke="#b8b8b8" stroke-width="0.8"/><polyline points="399.5,23 404.5,20 409.5,21 415.5,14" fill="none" stroke="#d04070" stroke-width="1"/><path d="M399.5 10 H406.5 M403.0 6.5 V13.5" stroke="#3c78d8" stroke-width="2.4"/><path d="M408.5 10 H415.5" stroke="#3c78d8" stroke-width="2.4"/><circle cx="434" cy="16.5" r="8" fill="#e6ecf2" stroke="#9aa0a8" stroke-width="1.6"/><rect x="432.5" y="5" width="3" height="2.5" fill="#8a9098"/><path d="M434 11 V17 H438" fill="none" stroke="#2050b0" stroke-width="1.4"/><line x1="449.5" y1="5.5" x2="449.5" y2="26" stroke="#a8a8a8" stroke-width="1.2"/><rect x="456.5" y="6.5" width="18.5" height="18" fill="#f4f4f4" stroke="#a8a8a8" stroke-width="0.8"/><line x1="462.7" y1="6.5" x2="462.7" y2="24.5" stroke="#b8b8b8" stroke-width="0.8"/><line x1="456.5" y1="12.5" x2="475.0" y2="12.5" stroke="#b8b8b8" stroke-width="0.8"/><line x1="468.9" y1="6.5" x2="468.9" y2="24.5" stroke="#b8b8b8" stroke-width="0.8"/><line x1="456.5" y1="18.5" x2="475.0" y2="18.5" stroke="#b8b8b8" stroke-width="0.8"/><polyline points="457.5,23 462.5,20 467.5,21 473.5,14" fill="none" stroke="#d04070" stroke-width="1"/><path d="M457.5 10.5 L461.5 7 V9 H466.5 V12 H461.5 V14 Z" fill="#4a88e0" stroke="#2a60b0" stroke-width="0.6"/><rect x="482.5" y="6.5" width="18.5" height="18" fill="#f4f4f4" stroke="#a8a8a8" stroke-width="0.8"/><line x1="488.7" y1="6.5" x2="488.7" y2="24.5" stroke="#b8b8b8" stroke-width="0.8"/><line x1="482.5" y1="12.5" x2="501.0" y2="12.5" stroke="#b8b8b8" stroke-width="0.8"/><line x1="494.9" y1="6.5" x2="494.9" y2="24.5" stroke="#b8b8b8" stroke-width="0.8"/><line x1="482.5" y1="18.5" x2="501.0" y2="18.5" stroke="#b8b8b8" stroke-width="0.8"/><polyline points="483.5,23 488.5,20 493.5,21 499.5,14" fill="none" stroke="#d04070" stroke-width="1"/><path d="M493.5 10.5 L489.5 7 V9 H484.5 V12 H489.5 V14 Z" fill="#4a88e0" stroke="#2a60b0" stroke-width="0.6"/><line x1="507.2" y1="5.5" x2="507.2" y2="26" stroke="#a8a8a8" stroke-width="1.2"/><rect x="517.8" y="9.5" width="3.4" height="11" fill="#5b80c8"/><rect x="525.5" y="9.5" width="3.4" height="11" fill="#5b80c8"/><line x1="539.5" y1="5.5" x2="539.5" y2="26" stroke="#a8a8a8" stroke-width="1.2"/><rect x="553" y="6" width="6" height="18.5" fill="#f0c868" stroke="#b08830" stroke-width="0.8"/><line x1="553.5" y1="9.5" x2="556" y2="9.5" stroke="#906018" stroke-width="0.9"/><line x1="553.5" y1="11.5" x2="556" y2="11.5" stroke="#906018" stroke-width="0.9"/><line x1="553.5" y1="13.5" x2="556" y2="13.5" stroke="#906018" stroke-width="0.9"/><line x1="553.5" y1="15.5" x2="556" y2="15.5" stroke="#906018" stroke-width="0.9"/><line x1="553.5" y1="17.5" x2="556" y2="17.5" stroke="#906018" stroke-width="0.9"/><line x1="553.5" y1="19.5" x2="556" y2="19.5" stroke="#906018" stroke-width="0.9"/><line x1="553.5" y1="21.5" x2="556" y2="21.5" stroke="#906018" stroke-width="0.9"/><path d="M547 11 L551 7.5 V9.5 H555 V12.5 H551 V14.5 Z" fill="#5a90e0" stroke="#3a68b8" stroke-width="0.6"/><path d="M564 19 L560 15.5 V17.5 H555 V20.5 H560 V22.5 Z" fill="#5a90e0" stroke="#3a68b8" stroke-width="0.6"/><path d="M577 8.5 H574 V21.5 H577 M586 8.5 H589 V21.5 H586" fill="none" stroke="#d8a848" stroke-width="2.2"/><polyline points="572,14 578,12 584,17 591,15" fill="none" stroke="#d05080" stroke-width="1"/><text x="600" y="21" font-family="Liberation Serif" font-style="italic" font-size="13" fill="#c8c8c8">∫</text><text x="605" y="19.5" font-family="Liberation Sans" font-size="9" fill="#cfcfcf">|x|</text><line x1="623" y1="5.5" x2="623" y2="26" stroke="#a8a8a8" stroke-width="1.2"/><path d="M637.5 10 L630 21.5" stroke="#3c68c0" stroke-width="1.6"/><circle cx="631.3" cy="12.5" r="1.6" fill="none" stroke="#3c68c0" stroke-width="1.2"/><circle cx="637" cy="19" r="1.6" fill="none" stroke="#3c68c0" stroke-width="1.2"/><rect x="641.5" y="6" width="6" height="19" fill="#f0c868" stroke="#b08830" stroke-width="0.8"/><line x1="642.0" y1="9.5" x2="644.5" y2="9.5" stroke="#906018" stroke-width="0.9"/><line x1="642.0" y1="11.5" x2="644.5" y2="11.5" stroke="#906018" stroke-width="0.9"/><line x1="642.0" y1="13.5" x2="644.5" y2="13.5" stroke="#906018" stroke-width="0.9"/><line x1="642.0" y1="15.5" x2="644.5" y2="15.5" stroke="#906018" stroke-width="0.9"/><line x1="642.0" y1="17.5" x2="644.5" y2="17.5" stroke="#906018" stroke-width="0.9"/><line x1="642.0" y1="19.5" x2="644.5" y2="19.5" stroke="#906018" stroke-width="0.9"/><line x1="642.0" y1="21.5" x2="644.5" y2="21.5" stroke="#906018" stroke-width="0.9"/><line x1="642.0" y1="23.5" x2="644.5" y2="23.5" stroke="#906018" stroke-width="0.9"/></svg>
<div style="position:absolute;left:888px;top:61px;width:601px;height:846px;background:#c0c0c0"></div>
<div style="position:absolute;left:1483px;top:61px;width:6px;height:846px;background:#c2c2c2"></div>
<div style="position:absolute;left:1489px;top:0px;width:4px;height:907px;background:#fafafa"></div>
<div style="position:absolute;left:1491px;top:6px;width:2px;height:901px;background:#111"></div>
<div style="position:absolute;left:894px;top:62px;width:581px;height:116px;background:#c0c0c0;border:1.5px solid #1e1e1e"></div>
<div style="position:absolute;left:915px;top:77.5px;width:90.5px;height:41.0px;background:#c0c0c0;border:1.5px solid #333;font-size:14px;color:#2a2a2a;letter-spacing:1px"><div class="c" style="height:100%;padding-left:1px">被试件型号:</div></div>
<div style="position:absolute;left:915px;top:127px;width:90.5px;height:41.5px;background:#c0c0c0;border:1.5px solid #333;font-size:14px;color:#2a2a2a;letter-spacing:1px"><div class="c" style="height:100%;padding-left:1px">试验编号:</div></div>
<div style="position:absolute;left:1194px;top:77px;width:91px;height:41.5px;background:#c0c0c0;border:1.5px solid #333;font-size:14px;color:#2a2a2a;letter-spacing:1px"><div class="c" style="height:100%;padding-left:1px">试验类型:</div></div>
<div style="position:absolute;left:1194px;top:125px;width:91px;height:41.5px;background:#c0c0c0;border:1.5px solid #333;font-size:14px;color:#2a2a2a;letter-spacing:1px"><div class="c" style="height:100%;padding-left:1px">试验电流:</div></div>
<div style="position:absolute;left:1014px;top:79px;width:169px;height:38px;background:#fff;border-top:1px solid #a0a0a0;border-left:1px solid #a0a0a0;border-right:1px solid #e8e8e8;border-bottom:1px solid #e8e8e8"></div>
<div style="position:absolute;left:1168px;top:80px;width:14px;height:36px;background:linear-gradient(90deg,#f4f4f4,#e8e8e8);border-left:1px solid #e0e0e0;border-bottom:1px solid #777;border-right:1px solid #777"></div>
<svg width="8" height="5" style="position:absolute;left:1171.5px;top:96px"><path d="M0 0 H7 L3.5 4 Z" fill="#111"/></svg>
<div style="position:absolute;left:1014px;top:127px;width:174px;height:41.5px;background:#fff;border:1.5px solid #2a2a2a"></div>
<div style="position:absolute;left:1293px;top:77px;width:174.5px;height:41.5px;background:#fff;border:1.5px solid #2a2a2a"></div>
<div style="position:absolute;left:1293px;top:125px;width:174.5px;height:41.5px;background:#fff;border:1.5px solid #2a2a2a"></div>
<div style="position:absolute;left:895px;top:185px;width:580px;height:372.5px;background:#c0c0c0;border:1.5px solid #1e1e1e"></div>
<div style="position:absolute;left:903px;top:190px;white-space:nowrap;font-size:19px;color:#1a1a1a;line-height:22px;-webkit-text-stroke:0.3px #1a1a1a">&gt;<span style="margin-left:3px">&gt;</span><span style="margin-left:0px">电流设定</span><span style="margin-left:2px">&gt;</span><span style="margin-left:3.5px">&gt;</span></div>
<div style="position:absolute;left:904px;top:218.5px;width:378px;height:25px;background:#edf2f6;border:1px solid #333;border-bottom:none"></div>
<div style="position:absolute;left:904px;top:220px;white-space:nowrap;width:378px;text-align:center;font-size:17px;font-weight:500;-webkit-text-stroke:0.35px #222;color:#222;line-height:22px">电流值设定</div>
<div style="position:absolute;left:904px;top:243.5px;width:378px;height:25px;background:#edf2f6;border:1px solid #333"></div>
<div style="position:absolute;left:904px;top:245px;white-space:nowrap;width:95px;text-align:center;font-size:17px;font-weight:500;-webkit-text-stroke:0.35px #222;color:#222;line-height:22px">相位</div>
<div style="position:absolute;left:999px;top:245px;white-space:nowrap;width:95px;text-align:center;font-size:17px;font-weight:500;-webkit-text-stroke:0.35px #222;color:#222;line-height:22px">输入设定</div>
<div style="position:absolute;left:998px;top:243.5px;width:2px;height:25px;background:#222"></div>
<div style="position:absolute;left:1094px;top:245px;white-space:nowrap;width:94px;text-align:center;font-size:17px;font-weight:500;-webkit-text-stroke:0.35px #222;color:#222;line-height:22px">步进增</div>
<div style="position:absolute;left:1093px;top:243.5px;width:2px;height:25px;background:#222"></div>
<div style="position:absolute;left:1188px;top:245px;white-space:nowrap;width:94px;text-align:center;font-size:17px;font-weight:500;-webkit-text-stroke:0.35px #222;color:#222;line-height:22px">步进减</div>
<div style="position:absolute;left:1187px;top:243.5px;width:1px;height:25px;background:#222"></div>
<div style="position:absolute;left:904px;top:270px;width:95px;height:34.5px;background:#edf2f6;border:1.5px solid #222;border-right:none"></div>
<div style="position:absolute;left:999px;top:270px;width:95px;height:34.5px;background:#fff;border:1.5px solid #222"></div>
<div style="position:absolute;left:904px;top:276px;white-space:nowrap;width:95px;text-align:center;font-family:'Liberation Serif', serif;font-weight:bold;font-size:17px;color:#222;line-height:22px">A</div>
<div style="position:absolute;left:999px;top:278px;white-space:nowrap;width:94px;text-align:right;font-family:'Liberation Serif', serif;font-size:16px;color:#333;line-height:18px">0. 0</div>
<div style="position:absolute;left:1095.5px;top:270px;width:93px;height:34px;background:linear-gradient(#f2f2f2 0%,#d6d6d6 45%,#c6c6c6 60%,#d8d8d8 100%);border:1px solid #aaaaaa;border-top-color:#d8d8d8;font-size:16px;color:#222"><div class="c" style="height:100%;font-weight:normal">+</div></div>
<div style="position:absolute;left:1190.0px;top:270px;width:93px;height:34px;background:linear-gradient(#f2f2f2 0%,#d6d6d6 45%,#c6c6c6 60%,#d8d8d8 100%);border:1px solid #aaaaaa;border-top-color:#d8d8d8;font-size:16px;color:#222"><div class="c" style="height:100%;font-weight:normal">−</div></div>
<div style="position:absolute;left:904px;top:304px;width:95px;height:34.0px;background:#edf2f6;border:1.5px solid #222;border-right:none"></div>
<div style="position:absolute;left:999px;top:304px;width:95px;height:34.0px;background:#fff;border:1.5px solid #222"></div>
<div style="position:absolute;left:904px;top:310px;white-space:nowrap;width:95px;text-align:center;font-family:'Liberation Serif', serif;font-weight:bold;font-size:17px;color:#222;line-height:22px">B</div>
<div style="position:absolute;left:999px;top:312px;white-space:nowrap;width:94px;text-align:right;font-family:'Liberation Serif', serif;font-size:16px;color:#333;line-height:18px">0. 0</div>
<div style="position:absolute;left:1095.5px;top:304px;width:93px;height:33.5px;background:linear-gradient(#f2f2f2 0%,#d6d6d6 45%,#c6c6c6 60%,#d8d8d8 100%);border:1px solid #aaaaaa;border-top-color:#d8d8d8;font-size:16px;color:#222"><div class="c" style="height:100%;font-weight:normal">+</div></div>
<div style="position:absolute;left:1190.0px;top:304px;width:93px;height:33.5px;background:linear-gradient(#f2f2f2 0%,#d6d6d6 45%,#c6c6c6 60%,#d8d8d8 100%);border:1px solid #aaaaaa;border-top-color:#d8d8d8;font-size:16px;color:#222"><div class="c" style="height:100%;font-weight:normal">−</div></div>
<div style="position:absolute;left:904px;top:337.5px;width:95px;height:33.0px;background:#edf2f6;border:1.5px solid #222;border-right:none"></div>
<div style="position:absolute;left:999px;top:337.5px;width:95px;height:33.0px;background:#fff;border:1.5px solid #222"></div>
<div style="position:absolute;left:904px;top:343.5px;white-space:nowrap;width:95px;text-align:center;font-family:'Liberation Serif', serif;font-weight:bold;font-size:17px;color:#222;line-height:22px">C</div>
<div style="position:absolute;left:999px;top:345.5px;white-space:nowrap;width:94px;text-align:right;font-family:'Liberation Serif', serif;font-size:16px;color:#333;line-height:18px">0. 0</div>
<div style="position:absolute;left:1095.5px;top:337.5px;width:93px;height:32.5px;background:linear-gradient(#f2f2f2 0%,#d6d6d6 45%,#c6c6c6 60%,#d8d8d8 100%);border:1px solid #aaaaaa;border-top-color:#d8d8d8;font-size:16px;color:#222"><div class="c" style="height:100%;font-weight:normal">+</div></div>
<div style="position:absolute;left:1190.0px;top:337.5px;width:93px;height:32.5px;background:linear-gradient(#f2f2f2 0%,#d6d6d6 45%,#c6c6c6 60%,#d8d8d8 100%);border:1px solid #aaaaaa;border-top-color:#d8d8d8;font-size:16px;color:#222"><div class="c" style="height:100%;font-weight:normal">−</div></div>
<div style="position:absolute;left:904px;top:370px;width:95px;height:33.0px;background:#edf2f6;border:1.5px solid #222;border-right:none"></div>
<div style="position:absolute;left:999px;top:370px;width:95px;height:33.0px;background:#fff;border:1.5px solid #222"></div>
<div style="position:absolute;left:1095.5px;top:370px;width:93px;height:32.5px;background:linear-gradient(#f2f2f2 0%,#d6d6d6 45%,#c6c6c6 60%,#d8d8d8 100%);border:1px solid #aaaaaa;border-top-color:#d8d8d8;font-size:18px;color:#222"><div class="c" style="height:100%;font-weight:normal">同加</div></div>
<div style="position:absolute;left:1190.0px;top:370px;width:93px;height:32.5px;background:linear-gradient(#f2f2f2 0%,#d6d6d6 45%,#c6c6c6 60%,#d8d8d8 100%);border:1px solid #aaaaaa;border-top-color:#d8d8d8;font-size:18px;color:#222"><div class="c" style="height:100%;font-weight:normal">同减</div></div>
<div style="position:absolute;left:1294px;top:273px;width:79px;height:57.5px;background:linear-gradient(#e8ffff 0%,#20e8e8 45%,#00ecec 100%);border:1.5px solid #38b8b8;border-radius:2px;font-size:24px;font-weight:normal;color:#111"><div class="c" style="height:100%">自动</div></div>
<div style="position:absolute;left:1377px;top:273px;width:79px;height:57.5px;background:linear-gradient(#ffffe0 0%,#f2ee18 45%,#f2ee00 100%);border:1.5px solid #c8c040;border-radius:2px;font-size:24px;font-weight:normal;color:#111"><div class="c" style="height:100%">手动</div></div>
<div style="position:absolute;left:1293.5px;top:342px;width:78.5px;height:57.5px;background:linear-gradient(#e0ffe0 0%,#30f030 45%,#20ec20 100%);border:1.5px solid #30a830;border-radius:2px;font-size:24px;font-weight:normal;color:#111"><div class="c" style="height:100%">启动</div></div>
<div style="position:absolute;left:1379px;top:342px;width:78px;height:57.5px;background:linear-gradient(#e8ffff 0%,#20e8e8 45%,#00ecec 100%);border:1.5px solid #38b8b8;border-radius:2px;font-size:24px;font-weight:normal;color:#111"><div class="c" style="height:100%">暂停</div></div>
<div style="position:absolute;left:903px;top:410.5px;white-space:nowrap;font-size:19px;color:#1a1a1a;line-height:22px;-webkit-text-stroke:0.3px #1a1a1a">&gt;<span style="margin-left:3px">&gt;</span><span style="margin-left:0px">计时设定</span><span style="margin-left:2px">&gt;</span><span style="margin-left:3.5px">&gt;</span></div>
<div style="position:absolute;left:904px;top:435.5px;width:377px;height:24px;background:#edf2f6;border:1px solid #333;border-bottom:none"></div>
<div style="position:absolute;left:904px;top:437px;white-space:nowrap;width:377px;text-align:center;font-size:17px;font-weight:500;-webkit-text-stroke:0.35px #222;color:#222;line-height:22px">计时设定</div>
<div style="position:absolute;left:904px;top:459.5px;width:377px;height:25px;background:#edf2f6;border:1px solid #333"></div>
<div style="position:absolute;left:904px;top:463px;white-space:nowrap;width:126px;text-align:center;font-family:'Liberation Mono', monospace;font-weight:bold;font-size:13px;color:#222;line-height:16px">H</div>
<div style="position:absolute;left:1030px;top:463px;white-space:nowrap;width:125px;text-align:center;font-family:'Liberation Mono', monospace;font-weight:bold;font-size:13px;color:#222;line-height:16px">M</div>
<div style="position:absolute;left:1029px;top:459.5px;width:2px;height:25px;background:#222"></div>
<div style="position:absolute;left:1155px;top:463px;white-space:nowrap;width:126px;text-align:center;font-family:'Liberation Mono', monospace;font-weight:bold;font-size:13px;color:#222;line-height:16px">S</div>
<div style="position:absolute;left:1154px;top:459.5px;width:1px;height:25px;background:#222"></div>
<div style="position:absolute;left:904px;top:484.5px;width:377px;height:33px;background:#fff;border:1.5px solid #1a1a1a"></div>
<div style="position:absolute;left:904px;top:486px;white-space:nowrap;width:125px;text-align:right;font-family:'Liberation Serif', serif;font-size:25px;color:#222;line-height:28px"><span style="display:inline-block;transform:scaleX(0.8);transform-origin:right">0</span></div>
<div style="position:absolute;left:1029px;top:484.5px;width:2px;height:33px;background:#1a1a1a"></div>
<div style="position:absolute;left:1030px;top:486px;white-space:nowrap;width:124px;text-align:right;font-family:'Liberation Serif', serif;font-size:25px;color:#222;line-height:28px"><span style="display:inline-block;transform:scaleX(0.8);transform-origin:right">0</span></div>
<div style="position:absolute;left:1154px;top:484.5px;width:2px;height:33px;background:#1a1a1a"></div>
<div style="position:absolute;left:1155px;top:486px;white-space:nowrap;width:125px;text-align:right;font-family:'Liberation Serif', serif;font-size:25px;color:#222;line-height:28px"><span style="display:inline-block;transform:scaleX(0.8);transform-origin:right">0</span></div>
<div style="position:absolute;left:895px;top:566px;width:580px;height:323px;background:linear-gradient(#bccad8 0px,#d6e0ea 27px,#d6e0ea 100%);border:1px solid #8a949c;border-top:1px solid #3c3c3c"></div>
<div style="position:absolute;left:902px;top:575.5px;white-space:nowrap;font-size:11px;color:#8a8a8a;line-height:14px">报警信息</div>
<div style="position:absolute;left:1451.5px;top:576px;width:14px;height:14px;background:#a8b0b8"></div>
<svg width="8" height="8" style="position:absolute;left:1455px;top:579.5px"><path d="M1 1 L6 6 M6 1 L1 6" stroke="#d0d8e0" stroke-width="1"/></svg>
<div style="position:absolute;left:902px;top:593.5px;width:566px;height:288px;background:#fff;border-top:1px solid #a0a8a0;border-left:1px solid #a8b0a8;border-right:1px solid #c8d0d8"></div>
<div style="position:absolute;left:1123px;top:730px;white-space:nowrap;font-size:11px;color:#222;line-height:16px">没有到数据服务器的连接!</div>
<div style="position:absolute;left:1493px;top:6px;width:108px;height:901px;background:#c0c0c0;border-right:1.5px solid #555"></div>
<div style="position:absolute;left:1493px;top:6px;width:107px;height:52px;background:#dadada;border-top:1px solid #555;border-bottom:1px solid #bbb"></div>
<div style="position:absolute;left:1491px;top:57.5px;width:109px;height:50.5px;background:#5a5a5a"></div>
<div style="position:absolute;left:1493px;top:74.0px;white-space:nowrap;width:97px;text-align:right;font-size:15px;color:#e6e6e6;line-height:20px">电流测试</div>
<div style="position:absolute;left:1493px;top:108.0px;width:107px;height:1px;background:#8a8a8a"></div>
<div style="position:absolute;left:1491px;top:115.9px;width:109px;height:50.5px;background:#5a5a5a"></div>
<div style="position:absolute;left:1493px;top:132.4px;white-space:nowrap;width:97px;text-align:right;font-size:15px;color:#e6e6e6;line-height:20px">分路测试</div>
<div style="position:absolute;left:1493px;top:166.4px;width:107px;height:1px;background:#8a8a8a"></div>
<div style="position:absolute;left:1491px;top:174.3px;width:109px;height:50.5px;background:#5a5a5a"></div>
<div style="position:absolute;left:1493px;top:224.8px;width:107px;height:1px;background:#8a8a8a"></div>
<div style="position:absolute;left:1491px;top:232.7px;width:109px;height:50.5px;background:#5a5a5a"></div>
<div style="position:absolute;left:1493px;top:283.2px;width:107px;height:1px;background:#8a8a8a"></div>
<div style="position:absolute;left:1491px;top:291.1px;width:109px;height:50.5px;background:#5a5a5a"></div>
<div style="position:absolute;left:1493px;top:307.6px;white-space:nowrap;width:97px;text-align:right;font-size:15px;color:#e6e6e6;line-height:20px">温度表格</div>
<div style="position:absolute;left:1493px;top:341.6px;width:107px;height:1px;background:#8a8a8a"></div>
<div style="position:absolute;left:1491px;top:349.5px;width:109px;height:50.5px;background:#5a5a5a"></div>
<div style="position:absolute;left:1493px;top:366.0px;white-space:nowrap;width:97px;text-align:right;font-size:15px;color:#e6e6e6;line-height:20px">温度趋势</div>
<div style="position:absolute;left:1493px;top:400.0px;width:107px;height:1px;background:#8a8a8a"></div>
<div style="position:absolute;left:1491px;top:407.9px;width:109px;height:50.5px;background:#5a5a5a"></div>
<div style="position:absolute;left:1493px;top:424.4px;white-space:nowrap;width:97px;text-align:right;font-size:15px;color:#e6e6e6;line-height:20px">报表查看</div>
<div style="position:absolute;left:1493px;top:458.4px;width:107px;height:1px;background:#8a8a8a"></div>
<div style="position:absolute;left:1491px;top:466.3px;width:109px;height:50.5px;background:#5a5a5a"></div>
<div style="position:absolute;left:1493px;top:482.8px;white-space:nowrap;width:97px;text-align:right;font-size:15px;color:#e6e6e6;line-height:20px">参数设置</div>
<div style="position:absolute;left:1493px;top:516.8px;width:107px;height:1px;background:#8a8a8a"></div>
<div style="position:absolute;left:1491px;top:524.7px;width:109px;height:50.5px;background:#5a5a5a"></div>
<div style="position:absolute;left:1493px;top:541.2px;white-space:nowrap;width:132px;text-align:center;font-size:15px;color:#e6e6e6;line-height:20px">返回</div>
<div style="position:absolute;left:1493px;top:575.2px;width:107px;height:1px;background:#8a8a8a"></div>
<div style="position:absolute;left:1491px;top:583.1px;width:109px;height:50.5px;background:#5a5a5a"></div>
<div style="position:absolute;left:1493px;top:633.6px;width:107px;height:1px;background:#8a8a8a"></div>
<svg width="50" height="46" style="position:absolute;left:1522px;top:6px"><path d="M13.7 27.6 A17.3 22 0 0 1 31.5 5.6 L28.5 27.6 Z" fill="#10a4ec"/><clipPath id="lc"><rect x="0" y="0" width="50" height="27.6"/></clipPath><circle cx="28.2" cy="22" r="8.3" fill="#ec0a0e" clip-path="url(#lc)"/><rect x="19.9" y="22" width="16.6" height="5.6" fill="#ec0a0e"/><path d="M32.2 3.5 L28.2 28.5" stroke="#eaf6ff" stroke-width="1.3"/><text x="24.9" y="32" text-anchor="middle" font-family="Liberation Sans" font-weight="bold" font-size="4.3" fill="#333">DONGLAI</text></svg>
<div style="position:absolute;left:1527px;top:40px;white-space:nowrap;font-size:8.2px;font-weight:bold;color:#111;line-height:12px;letter-spacing:2.6px">东来电气</div>
<div style="position:absolute;left:0px;top:905px;width:1603px;height:2px;background:#fbfbfd"></div>
<div style="position:absolute;left:832px;top:900px;width:30px;height:7px;background:linear-gradient(#dfe2e6,#eef0f2);border-radius:6px 6px 0 0"></div>
<svg width="10" height="6" style="position:absolute;left:843px;top:902.5px"><path d="M0.5 0.5 H8.5 L4.5 5.5 Z" fill="#5a5a5a"/></svg>
</body></html>
